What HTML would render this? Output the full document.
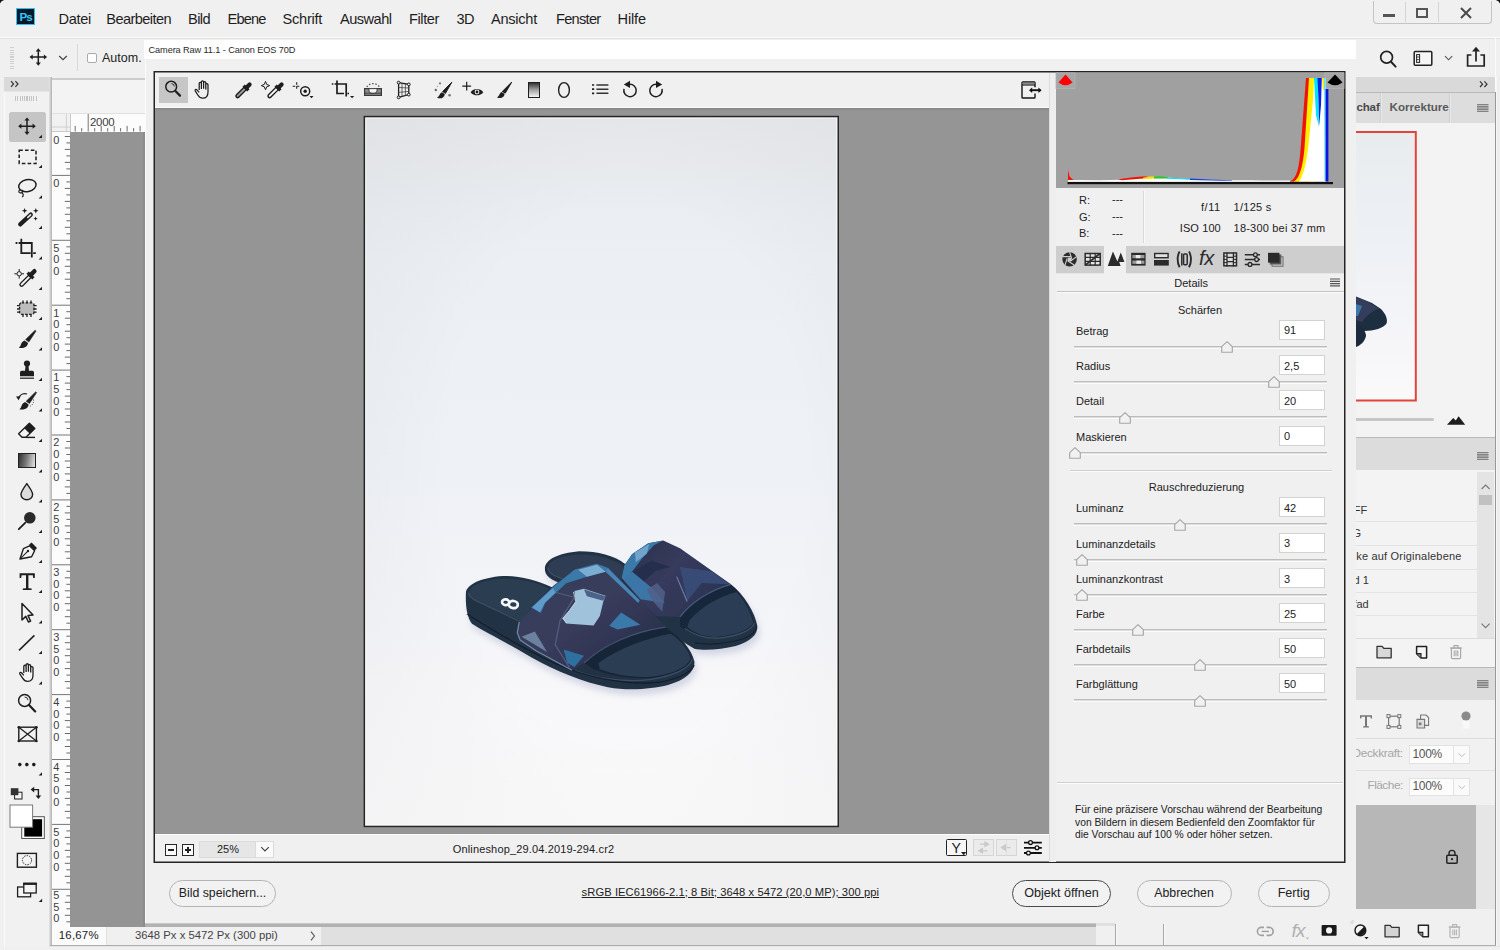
<!DOCTYPE html><html><head><meta charset="utf-8"><title>Camera Raw</title><style>
*{box-sizing:border-box}
html,body{margin:0;padding:0}
body{width:1500px;height:950px;position:relative;overflow:hidden;background:#f0f0f0;font-family:"Liberation Sans",sans-serif;color:#222;font-size:12px}
.a{position:absolute}
.t{position:absolute;white-space:nowrap;line-height:1}
svg{position:absolute;overflow:visible}
</style></head><body>
<div class="a" style="left:0px;top:0px;width:1500px;height:950px;background:#f0f0f0;"></div>
<div class="a" style="left:0px;top:37px;width:1500px;height:1px;background:#fafafa;"></div>
<div class="a" style="left:0px;top:38px;width:1500px;height:1px;background:#e2e2e2;"></div>
<div class="a" style="left:16px;top:8px;width:19px;height:17.4px;background:#07182a;border:1px solid #29c4f4;"></div>
<div class="t" style="left:19.6px;top:11.01px;font-size:11.6px;color:#35c8f4;letter-spacing:-1.194px;font-weight:bold;">Ps</div>
<div class="t" style="left:58.5px;top:11.96px;font-size:14.6px;color:#1e1e1e;letter-spacing:-0.357px;">Datei</div>
<div class="t" style="left:106.3px;top:11.96px;font-size:14.6px;color:#1e1e1e;letter-spacing:-0.592px;">Bearbeiten</div>
<div class="t" style="left:188px;top:11.96px;font-size:14.6px;color:#1e1e1e;letter-spacing:-0.586px;">Bild</div>
<div class="t" style="left:227.5px;top:11.96px;font-size:14.6px;color:#1e1e1e;letter-spacing:-0.843px;">Ebene</div>
<div class="t" style="left:282.6px;top:11.96px;font-size:14.6px;color:#1e1e1e;letter-spacing:-0.282px;">Schrift</div>
<div class="t" style="left:340px;top:11.96px;font-size:14.6px;color:#1e1e1e;letter-spacing:-0.526px;">Auswahl</div>
<div class="t" style="left:409px;top:11.96px;font-size:14.6px;color:#1e1e1e;letter-spacing:-0.407px;">Filter</div>
<div class="t" style="left:456.5px;top:11.96px;font-size:14.6px;color:#1e1e1e;letter-spacing:-0.582px;">3D</div>
<div class="t" style="left:491px;top:11.96px;font-size:14.6px;color:#1e1e1e;letter-spacing:-0.268px;">Ansicht</div>
<div class="t" style="left:556px;top:11.96px;font-size:14.6px;color:#1e1e1e;letter-spacing:-0.714px;">Fenster</div>
<div class="t" style="left:617.5px;top:11.96px;font-size:14.6px;color:#1e1e1e;letter-spacing:-0.141px;">Hilfe</div>
<div class="a" style="left:1372.5px;top:1px;width:119.5px;height:22.6px;background:#f0f0f0;border:1px solid #c4c4c4;border-top:none;border-radius:0 0 4px 4px;"></div>
<div class="a" style="left:1405px;top:2px;width:1px;height:20px;background:#d4d4d4;"></div>
<div class="a" style="left:1438px;top:2px;width:1px;height:20px;background:#d4d4d4;"></div>
<div class="a" style="left:1383.4px;top:13.8px;width:11.4px;height:3.6px;background:#555;"></div>
<div class="a" style="left:1416px;top:8.4px;width:12.2px;height:9.4px;border:2.2px solid #555;"></div>
<svg style="left:1460px;top:6.5px" width="12" height="12"><path d="M1 1L11 11M11 1L1 11" stroke="#4a4a4a" stroke-width="2" fill="none"/></svg>
<div class="t" style="left:102px;top:52px;font-size:12.5px;color:#222;">Autom.</div>
<div class="a" style="left:87px;top:53px;width:10px;height:10px;background:#fff;border:1px solid #aaa;border-radius:2px;"></div>
<div class="a" style="left:77px;top:44px;width:1px;height:27px;background:#d8d8d8;"></div>
<div class="a" style="left:4px;top:77px;width:46px;height:870px;background:#f1f1f1;"></div>
<div class="a" style="left:4px;top:77px;width:1px;height:870px;background:#fafafa;"></div>
<div class="a" style="left:4px;top:77px;width:46px;height:14px;background:#dadada;"></div>
<div class="a" style="left:4px;top:91px;width:46px;height:1px;background:#e6e6e6;"></div>
<svg style="left:9px;top:79px" width="14" height="10" viewBox="9 79 14 10"><path d="M11 81.2L13.6 84L11 86.8M15.4 81.2L18 84L15.4 86.8" fill="none" stroke="#333" stroke-width="1.2"/></svg>
<div class="a" style="left:15px;top:96px;width:23px;height:5px;background:repeating-linear-gradient(90deg,#c4c4c4 0 1px,transparent 1px 2.3px)"></div>
<div class="a" style="left:49px;top:77px;width:1px;height:870px;background:#dedede;"></div>
<div class="a" style="left:50px;top:77px;width:1px;height:870px;background:#cbcbcb;"></div>
<div class="a" style="left:51px;top:77px;width:1px;height:870px;background:#bababa;"></div>
<div class="a" style="left:10px;top:46px;width:4px;height:23px;background:repeating-linear-gradient(0deg,#cfcfcf 0 1px,transparent 1px 2.3px)"></div>
<svg style="left:26px;top:44px" width="26" height="26" viewBox="26 44 26 26"><path d="M38.3 50.2V63.8M31.499999999999996 57H45.099999999999994" stroke="#1e1e1e" stroke-width="1.5"/><path d="M38.3 48.2l2.6 3.2h-5.2zM38.3 65.8l2.6 -3.2h-5.2zM29.499999999999996 57l3.2 -2.6v5.2zM47.099999999999994 57l-3.2 -2.6v5.2z" fill="#1e1e1e"/></svg>
<svg style="left:56px;top:50px" width="14" height="12" viewBox="56 50 14 12"><path d="M59.2 56L63 59.6L66.8 56" fill="none" stroke="#444" stroke-width="1.2"/></svg>
<div class="a" style="left:8.5px;top:112px;width:37.5px;height:29.5px;background:#c5c5c5;border-radius:2.5px;"></div>
<div class="a" style="left:18.4px;top:453.4px;width:18px;height:14.2px;border:1.4px solid #222;background:linear-gradient(100deg,#333,#777 45%,#e8e8e8)"></div>
<svg style="left:0px;top:100px" width="52" height="820" viewBox="0 100 52 820"><path d="M27 119.4V133.0M20.2 126.2H33.8" stroke="#1e1e1e" stroke-width="1.5"/><path d="M27 117.4l2.6 3.2h-5.2zM27 135.0l2.6 -3.2h-5.2zM18.2 126.2l3.2 -2.6v5.2zM35.8 126.2l-3.2 -2.6v5.2z" fill="#1e1e1e"/><path d="M42.0 134.7V138.1H38.6Z" fill="#1e1e1e"/><rect x="19.2" y="150.2" width="16.8" height="13.2" fill="none" stroke="#1e1e1e" stroke-width="1.5" stroke-dasharray="3.6 2.2"/><path d="M42.0 164.7V168.1H38.6Z" fill="#1e1e1e"/><g transform="rotate(-12 27.4 185.6)"><ellipse cx="27.4" cy="185.6" rx="8.8" ry="6" fill="none" stroke="#1e1e1e" stroke-width="1.5"/></g><path d="M20.6 189.6c-1.8 .2 -2.6 2.6 -.6 3.2c2 .5 3.6 -1.4 2.2 -2.8M22 192.6c1.6 1.4 1.6 3.2 .2 4.6" fill="none" stroke="#1e1e1e" stroke-width="1.2"/><path d="M42.0 195.2V198.6H38.6Z" fill="#1e1e1e"/><path d="M20.2 224.4L30.8 214.6" stroke="#1e1e1e" stroke-width="4.2" stroke-linecap="round"/><path d="M27.8 217.4L30.6 214.8" stroke="#e8e8e8" stroke-width="1.6" stroke-linecap="round"/><path d="M24.6 208.0L25.384 210.01600000000002L27.400000000000002 210.8L25.384 211.584L24.6 213.60000000000002L23.816000000000003 211.584L21.8 210.8L23.816000000000003 210.01600000000002Z" fill="#1e1e1e"/><path d="M35.8 208.0L36.583999999999996 210.01600000000002L38.599999999999994 210.8L36.583999999999996 211.584L35.8 213.60000000000002L35.016 211.584L33.0 210.8L35.016 210.01600000000002Z" fill="#1e1e1e"/><path d="M35.6 216.4L36.216 217.98399999999998L37.800000000000004 218.6L36.216 219.216L35.6 220.79999999999998L34.984 219.216L33.4 218.6L34.984 217.98399999999998Z" fill="#1e1e1e"/><path d="M42.0 225.7V229.1H38.6Z" fill="#1e1e1e"/><path d="M21.3 238.8V253.2H30.6M18.6 243H31.8V257.4" fill="none" stroke="#1e1e1e" stroke-width="1.8"/><path d="M15.6 243h1.8M33.2 253.2h2.6" stroke="#1e1e1e" stroke-width="1.8"/><path d="M42.0 256.2V259.6H38.6Z" fill="#1e1e1e"/><path d="M21.6 284.6L29.6 276.6" stroke="#1e1e1e" stroke-width="4.6" stroke-linecap="round"/><path d="M21.7 284.5L28.8 277.4" stroke="#f4f4f4" stroke-width="2" stroke-linecap="round"/><path d="M27.6 272.6L33.4 278.4" stroke="#1e1e1e" stroke-width="3.2"/><path d="M31 274.6L34.4 271.2" stroke="#1e1e1e" stroke-width="4.4" stroke-linecap="round"/><circle cx="19.2" cy="273.8" r="2.2" fill="none" stroke="#1e1e1e" stroke-width="1"/><path d="M19.2 269V271.4M19.2 276.2V278.6M14.4 273.8H16.8M21.6 273.8H24" stroke="#1e1e1e" stroke-width="1"/><path d="M42.0 286.7V290.1H38.6Z" fill="#1e1e1e"/><rect x="19.6" y="302.8" width="14.4" height="11.6" rx="2" fill="#bdbdbd" stroke="#1e1e1e" stroke-width="1.3" stroke-dasharray="2.6 1.4"/><path d="M23 300.4V303M27 300.4V303M31 300.4V303M23 314.4V317M27 314.4V317M31 314.4V317M17 305.6H19.8M17 309H19.8M17 312.2H19.8M33.8 305.6H36.6M33.8 309H36.6M33.8 312.2H36.6" stroke="#1e1e1e" stroke-width="1.3"/><path d="M42.0 316.7V320.1H38.6Z" fill="#1e1e1e"/><g transform="translate(0,0)"><path d="M35.2 330.2L36 331L28.8 342L25.6 339.6Z" fill="#1e1e1e" stroke="#1e1e1e" stroke-width="0.6" stroke-linejoin="round"/><path d="M24.6 340.4L28 343C27.8 346.6 24 348.6 18.8 347.8C21.4 346 20.4 341.8 24.6 340.4Z" fill="#1e1e1e"/></g><path d="M42.0 347.2V350.6H38.6Z" fill="#1e1e1e"/><circle cx="27" cy="363.6" r="3.1" fill="#1e1e1e"/><path d="M25.6 365.5h2.8l.6 5.6h-4z" fill="#1e1e1e"/><path d="M20 376.2V372.4a1.6 1.6 0 0 1 1.6 -1.6H32.4a1.6 1.6 0 0 1 1.6 1.6V376.2Z" fill="#1e1e1e"/><path d="M20 378.2H34" stroke="#1e1e1e" stroke-width="1.2"/><path d="M42.0 377.7V381.1H38.6Z" fill="#1e1e1e"/><g transform="translate(0.6,61.6)"><path d="M35.2 330.2L36 331L28.8 342L25.6 339.6Z" fill="#1e1e1e" stroke="#1e1e1e" stroke-width="0.6" stroke-linejoin="round"/><path d="M24.6 340.4L28 343C27.8 346.6 24 348.6 18.8 347.8C21.4 346 20.4 341.8 24.6 340.4Z" fill="#1e1e1e"/></g><path d="M18.4 398.2C20 394.6 23.6 393 27 394" fill="none" stroke="#1e1e1e" stroke-width="1.2"/><path d="M16 396.4L20.6 396.2L18.6 400.2Z" fill="#1e1e1e"/><path d="M33.4 399.4C34 402.6 32.6 405 30 406.4" fill="none" stroke="#666" stroke-width="1" stroke-dasharray="1.2 1.2"/><path d="M42.0 408.2V411.6H38.6Z" fill="#1e1e1e"/><path d="M29.4 423.2L34.8 428.6L26 437.2L22 437.2L18.6 433.8Z" fill="#f4f4f4" stroke="#1e1e1e" stroke-width="1.4" stroke-linejoin="round"/><path d="M29.4 423.2L34.8 428.6L29.6 433.6L24.2 428.2Z" fill="#1e1e1e"/><path d="M26 437.4H35" stroke="#1e1e1e" stroke-width="1.4"/><path d="M42.0 438.7V442.1H38.6Z" fill="#1e1e1e"/><path d="M42.0 469.2V472.6H38.6Z" fill="#1e1e1e"/><path d="M26.8 483.6C30 488 32.6 491.4 32.6 494.4A5.8 5.4 0 0 1 21 494.4C21 491.4 23.6 488 26.8 483.6Z" fill="#dcdcdc" stroke="#1e1e1e" stroke-width="1.4" stroke-linejoin="round"/><path d="M42.0 499.2V502.6H38.6Z" fill="#1e1e1e"/><circle cx="29.8" cy="517.8" r="5.8" fill="#2a2a2a"/><path d="M25.4 522.6L18.8 529.2" stroke="#1e1e1e" stroke-width="1.8" stroke-linecap="round"/><path d="M42.0 529.7V533.1H38.6Z" fill="#1e1e1e"/><path d="M20 559L23.4 548.6L29.6 545.8L34.6 550.8L31.6 556.8Z" fill="#f4f4f4" stroke="#1e1e1e" stroke-width="1.4" stroke-linejoin="round"/><path d="M29 544.8L31.6 542.6L37 548L34.8 550.6Z" fill="#1e1e1e"/><path d="M20.4 558.6L27.6 551.4" stroke="#1e1e1e" stroke-width="1.1"/><circle cx="28" cy="551" r="1.2" fill="#1e1e1e"/><path d="M42.0 559.7V563.1H38.6Z" fill="#1e1e1e"/><path d="M19.6 573.2H34.8V578H33.2L32.8 575.2H28.4V588.2L31.6 588.6V590H22.8V588.6L26 588.2V575.2H21.6L21.2 578H19.6Z" fill="#1e1e1e"/><path d="M42.0 589.7V593.1H38.6Z" fill="#1e1e1e"/><path d="M22 603.6V620L25.8 616.4L28.4 622L30.6 621L28 615.6L33 615Z" fill="#f4f4f4" stroke="#1e1e1e" stroke-width="1.5" stroke-linejoin="round"/><path d="M42.0 620.2V623.6H38.6Z" fill="#1e1e1e"/><path d="M19 650.4L34.4 635.4" stroke="#1e1e1e" stroke-width="1.5"/><path d="M42.0 650.7V654.1H38.6Z" fill="#1e1e1e"/><g transform="translate(16.6,662)"><path d="M7.2 11V4.4a1.15 1.15 0 0 1 2.3 0V10M9.5 9.6V2.9a1.15 1.15 0 0 1 2.3 0V9.6M11.8 9.8V3.7a1.15 1.15 0 0 1 2.3 0V10.2M14.1 10.6V5.8a1.15 1.15 0 0 1 2.3 0V13c0 4-2 6.4-5.4 6.4c-2.6 0-3.8-1.2-5-3.2L3.2 11.8c-.6-1.1 .8-2 1.7-1L7.2 13.4" fill="#f4f4f4" stroke="#1e1e1e" stroke-width="1.3" stroke-linejoin="round"/></g><path d="M42.0 681.2V684.6H38.6Z" fill="#1e1e1e"/><circle cx="24.6" cy="700.4" r="6" fill="none" stroke="#1e1e1e" stroke-width="1.5"/><path d="M29 705L35.2 711.4" stroke="#1e1e1e" stroke-width="2.2" stroke-linecap="round"/><path d="M24.6 697A3.4 3.4 0 0 1 28 700.2" fill="none" stroke="#1e1e1e" stroke-width="0.9"/><rect x="18.8" y="727.2" width="17.6" height="13.8" fill="none" stroke="#1e1e1e" stroke-width="1.4"/><path d="M18.8 727.2L36.4 741M36.4 727.2L18.8 741" stroke="#1e1e1e" stroke-width="1.2"/><g fill="#1e1e1e"><circle cx="18.8" cy="727.2" r="1.3"/><circle cx="36.4" cy="727.2" r="1.3"/><circle cx="18.8" cy="741" r="1.3"/><circle cx="36.4" cy="741" r="1.3"/></g><g fill="#1e1e1e"><circle cx="19.8" cy="764.6" r="1.8"/><circle cx="26.8" cy="764.6" r="1.8"/><circle cx="33.8" cy="764.6" r="1.8"/></g><path d="M42.0 772.2V775.6H38.6Z" fill="#1e1e1e"/><rect x="14.6" y="792.2" width="7.4" height="6.8" fill="#f6f6f6" stroke="#1e1e1e" stroke-width="1"/><rect x="10.8" y="788.2" width="7.6" height="7" fill="#333"/><path d="M33.4 789.6H38.4V796.4" fill="none" stroke="#1e1e1e" stroke-width="1.4"/><path d="M30.6 789.6L34.2 786.8V792.4ZM38.4 799L35.6 795.4H41.2Z" fill="#1e1e1e"/><rect x="21.7" y="816.7" width="22.6" height="21.8" fill="#fff" stroke="#555" stroke-width="1"/><rect x="24.3" y="819.2" width="17.8" height="17.4" fill="#000"/><rect x="10" y="805" width="22.6" height="22.2" fill="#fff" stroke="#7a7a7a" stroke-width="1"/><rect x="17.4" y="853.4" width="19" height="13.8" fill="#f4f4f4" stroke="#1e1e1e" stroke-width="1.4"/><circle cx="27" cy="860.2" r="4.6" fill="none" stroke="#1e1e1e" stroke-width="1" stroke-dasharray="1.4 1.2"/><rect x="17.6" y="887" width="13" height="9.8" fill="#f4f4f4" stroke="#1e1e1e" stroke-width="1.3"/><rect x="23.8" y="883.4" width="12.4" height="9.6" fill="#f4f4f4" stroke="#1e1e1e" stroke-width="1.3"/><path d="M23.2 883.8H36.8" stroke="#1e1e1e" stroke-width="2.2"/><path d="M42.1 898.7V902.1H38.7Z" fill="#1e1e1e"/></svg>
<div class="a" style="left:52px;top:78px;width:93px;height:1.6px;background:#cdcdcd;"></div>
<div class="a" style="left:52px;top:79.6px;width:93px;height:33px;background:#f3f3f3;"></div>
<div class="a" style="left:52px;top:112.5px;width:93px;height:1px;background:#e0e0e0;"></div>
<div class="a" style="left:70px;top:131px;width:75px;height:796px;background:#949494;"></div>
<div class="a" style="left:143px;top:131px;width:2px;height:796px;background:#8c8c8c;"></div>
<div class="a" style="left:52px;top:113.5px;width:93px;height:18px;background:#fcfcfc;"></div>
<div class="a" style="left:52px;top:113.5px;width:18px;height:18px;background:#f1f1f1;"></div>
<div class="a" style="left:52px;top:131px;width:18px;height:0.8px;background:#c8c8c8;"></div>
<div class="a" style="left:69.5px;top:113.5px;width:0.8px;height:18px;background:#c8c8c8;"></div>
<svg style="left:52px;top:113px" width="93" height="19" viewBox="52 113 93 19"><path d="M88.2 114V131.5" stroke="#777" stroke-width="1"/><path d="M75.2 125.9V131.5" stroke="#6e6e6e" stroke-width="1"/><path d="M81.7 128.1V131.5" stroke="#6e6e6e" stroke-width="1"/><path d="M94.7 128.1V131.5" stroke="#6e6e6e" stroke-width="1"/><path d="M101.2 125.9V131.5" stroke="#6e6e6e" stroke-width="1"/><path d="M107.7 128.1V131.5" stroke="#6e6e6e" stroke-width="1"/><path d="M114.2 125.9V131.5" stroke="#6e6e6e" stroke-width="1"/><path d="M120.6 128.1V131.5" stroke="#6e6e6e" stroke-width="1"/><path d="M127.1 125.9V131.5" stroke="#6e6e6e" stroke-width="1"/><path d="M133.6 128.1V131.5" stroke="#6e6e6e" stroke-width="1"/><path d="M140.1 125.9V131.5" stroke="#6e6e6e" stroke-width="1"/><path d="M66.4 114V131.5M52 127H70" stroke="#d0d0d0" stroke-width="1"/></svg>
<div class="t" style="left:89.9px;top:116.93px;font-size:11.4px;color:#3c3c3c;letter-spacing:-0.215px;">2000</div>
<div class="a" style="left:52px;top:131.5px;width:18px;height:795.5px;background:#fcfcfc;"></div>
<svg style="left:52px;top:131px" width="18" height="796" viewBox="52 131 18 796"><path d="M64.8 136.5H70" stroke="#6a6a6a" stroke-width="1"/><path d="M66.4 142.9H70" stroke="#6a6a6a" stroke-width="1"/><path d="M64.8 149.4H70" stroke="#6a6a6a" stroke-width="1"/><path d="M66.4 155.9H70" stroke="#6a6a6a" stroke-width="1"/><path d="M64.8 162.4H70" stroke="#6a6a6a" stroke-width="1"/><path d="M66.4 168.9H70" stroke="#6a6a6a" stroke-width="1"/><path d="M52 175.4H70" stroke="#777" stroke-width="1"/><path d="M66.4 181.9H70" stroke="#6a6a6a" stroke-width="1"/><path d="M64.8 188.4H70" stroke="#6a6a6a" stroke-width="1"/><path d="M66.4 194.9H70" stroke="#6a6a6a" stroke-width="1"/><path d="M64.8 201.4H70" stroke="#6a6a6a" stroke-width="1"/><path d="M66.4 207.9H70" stroke="#6a6a6a" stroke-width="1"/><path d="M64.8 214.3H70" stroke="#6a6a6a" stroke-width="1"/><path d="M66.4 220.8H70" stroke="#6a6a6a" stroke-width="1"/><path d="M64.8 227.3H70" stroke="#6a6a6a" stroke-width="1"/><path d="M66.4 233.8H70" stroke="#6a6a6a" stroke-width="1"/><path d="M52 240.3H70" stroke="#777" stroke-width="1"/><path d="M66.4 246.8H70" stroke="#6a6a6a" stroke-width="1"/><path d="M64.8 253.3H70" stroke="#6a6a6a" stroke-width="1"/><path d="M66.4 259.8H70" stroke="#6a6a6a" stroke-width="1"/><path d="M64.8 266.3H70" stroke="#6a6a6a" stroke-width="1"/><path d="M66.4 272.8H70" stroke="#6a6a6a" stroke-width="1"/><path d="M64.8 279.2H70" stroke="#6a6a6a" stroke-width="1"/><path d="M66.4 285.7H70" stroke="#6a6a6a" stroke-width="1"/><path d="M64.8 292.2H70" stroke="#6a6a6a" stroke-width="1"/><path d="M66.4 298.7H70" stroke="#6a6a6a" stroke-width="1"/><path d="M52 305.2H70" stroke="#777" stroke-width="1"/><path d="M66.4 311.7H70" stroke="#6a6a6a" stroke-width="1"/><path d="M64.8 318.2H70" stroke="#6a6a6a" stroke-width="1"/><path d="M66.4 324.7H70" stroke="#6a6a6a" stroke-width="1"/><path d="M64.8 331.2H70" stroke="#6a6a6a" stroke-width="1"/><path d="M66.4 337.7H70" stroke="#6a6a6a" stroke-width="1"/><path d="M64.8 344.1H70" stroke="#6a6a6a" stroke-width="1"/><path d="M66.4 350.6H70" stroke="#6a6a6a" stroke-width="1"/><path d="M64.8 357.1H70" stroke="#6a6a6a" stroke-width="1"/><path d="M66.4 363.6H70" stroke="#6a6a6a" stroke-width="1"/><path d="M52 370.1H70" stroke="#777" stroke-width="1"/><path d="M66.4 376.6H70" stroke="#6a6a6a" stroke-width="1"/><path d="M64.8 383.1H70" stroke="#6a6a6a" stroke-width="1"/><path d="M66.4 389.6H70" stroke="#6a6a6a" stroke-width="1"/><path d="M64.8 396.1H70" stroke="#6a6a6a" stroke-width="1"/><path d="M66.4 402.6H70" stroke="#6a6a6a" stroke-width="1"/><path d="M64.8 409.0H70" stroke="#6a6a6a" stroke-width="1"/><path d="M66.4 415.5H70" stroke="#6a6a6a" stroke-width="1"/><path d="M64.8 422.0H70" stroke="#6a6a6a" stroke-width="1"/><path d="M66.4 428.5H70" stroke="#6a6a6a" stroke-width="1"/><path d="M52 435.0H70" stroke="#777" stroke-width="1"/><path d="M66.4 441.5H70" stroke="#6a6a6a" stroke-width="1"/><path d="M64.8 448.0H70" stroke="#6a6a6a" stroke-width="1"/><path d="M66.4 454.5H70" stroke="#6a6a6a" stroke-width="1"/><path d="M64.8 461.0H70" stroke="#6a6a6a" stroke-width="1"/><path d="M66.4 467.4H70" stroke="#6a6a6a" stroke-width="1"/><path d="M64.8 473.9H70" stroke="#6a6a6a" stroke-width="1"/><path d="M66.4 480.4H70" stroke="#6a6a6a" stroke-width="1"/><path d="M64.8 486.9H70" stroke="#6a6a6a" stroke-width="1"/><path d="M66.4 493.4H70" stroke="#6a6a6a" stroke-width="1"/><path d="M52 499.9H70" stroke="#777" stroke-width="1"/><path d="M66.4 506.4H70" stroke="#6a6a6a" stroke-width="1"/><path d="M64.8 512.9H70" stroke="#6a6a6a" stroke-width="1"/><path d="M66.4 519.4H70" stroke="#6a6a6a" stroke-width="1"/><path d="M64.8 525.9H70" stroke="#6a6a6a" stroke-width="1"/><path d="M66.4 532.4H70" stroke="#6a6a6a" stroke-width="1"/><path d="M64.8 538.8H70" stroke="#6a6a6a" stroke-width="1"/><path d="M66.4 545.3H70" stroke="#6a6a6a" stroke-width="1"/><path d="M64.8 551.8H70" stroke="#6a6a6a" stroke-width="1"/><path d="M66.4 558.3H70" stroke="#6a6a6a" stroke-width="1"/><path d="M52 564.8H70" stroke="#777" stroke-width="1"/><path d="M66.4 571.3H70" stroke="#6a6a6a" stroke-width="1"/><path d="M64.8 577.8H70" stroke="#6a6a6a" stroke-width="1"/><path d="M66.4 584.3H70" stroke="#6a6a6a" stroke-width="1"/><path d="M64.8 590.8H70" stroke="#6a6a6a" stroke-width="1"/><path d="M66.4 597.3H70" stroke="#6a6a6a" stroke-width="1"/><path d="M64.8 603.7H70" stroke="#6a6a6a" stroke-width="1"/><path d="M66.4 610.2H70" stroke="#6a6a6a" stroke-width="1"/><path d="M64.8 616.7H70" stroke="#6a6a6a" stroke-width="1"/><path d="M66.4 623.2H70" stroke="#6a6a6a" stroke-width="1"/><path d="M52 629.7H70" stroke="#777" stroke-width="1"/><path d="M66.4 636.2H70" stroke="#6a6a6a" stroke-width="1"/><path d="M64.8 642.7H70" stroke="#6a6a6a" stroke-width="1"/><path d="M66.4 649.2H70" stroke="#6a6a6a" stroke-width="1"/><path d="M64.8 655.7H70" stroke="#6a6a6a" stroke-width="1"/><path d="M66.4 662.2H70" stroke="#6a6a6a" stroke-width="1"/><path d="M64.8 668.6H70" stroke="#6a6a6a" stroke-width="1"/><path d="M66.4 675.1H70" stroke="#6a6a6a" stroke-width="1"/><path d="M64.8 681.6H70" stroke="#6a6a6a" stroke-width="1"/><path d="M66.4 688.1H70" stroke="#6a6a6a" stroke-width="1"/><path d="M52 694.6H70" stroke="#777" stroke-width="1"/><path d="M66.4 701.1H70" stroke="#6a6a6a" stroke-width="1"/><path d="M64.8 707.6H70" stroke="#6a6a6a" stroke-width="1"/><path d="M66.4 714.1H70" stroke="#6a6a6a" stroke-width="1"/><path d="M64.8 720.6H70" stroke="#6a6a6a" stroke-width="1"/><path d="M66.4 727.1H70" stroke="#6a6a6a" stroke-width="1"/><path d="M64.8 733.5H70" stroke="#6a6a6a" stroke-width="1"/><path d="M66.4 740.0H70" stroke="#6a6a6a" stroke-width="1"/><path d="M64.8 746.5H70" stroke="#6a6a6a" stroke-width="1"/><path d="M66.4 753.0H70" stroke="#6a6a6a" stroke-width="1"/><path d="M52 759.5H70" stroke="#777" stroke-width="1"/><path d="M66.4 766.0H70" stroke="#6a6a6a" stroke-width="1"/><path d="M64.8 772.5H70" stroke="#6a6a6a" stroke-width="1"/><path d="M66.4 779.0H70" stroke="#6a6a6a" stroke-width="1"/><path d="M64.8 785.5H70" stroke="#6a6a6a" stroke-width="1"/><path d="M66.4 792.0H70" stroke="#6a6a6a" stroke-width="1"/><path d="M64.8 798.4H70" stroke="#6a6a6a" stroke-width="1"/><path d="M66.4 804.9H70" stroke="#6a6a6a" stroke-width="1"/><path d="M64.8 811.4H70" stroke="#6a6a6a" stroke-width="1"/><path d="M66.4 817.9H70" stroke="#6a6a6a" stroke-width="1"/><path d="M52 824.4H70" stroke="#777" stroke-width="1"/><path d="M66.4 830.9H70" stroke="#6a6a6a" stroke-width="1"/><path d="M64.8 837.4H70" stroke="#6a6a6a" stroke-width="1"/><path d="M66.4 843.9H70" stroke="#6a6a6a" stroke-width="1"/><path d="M64.8 850.4H70" stroke="#6a6a6a" stroke-width="1"/><path d="M66.4 856.9H70" stroke="#6a6a6a" stroke-width="1"/><path d="M64.8 863.3H70" stroke="#6a6a6a" stroke-width="1"/><path d="M66.4 869.8H70" stroke="#6a6a6a" stroke-width="1"/><path d="M64.8 876.3H70" stroke="#6a6a6a" stroke-width="1"/><path d="M66.4 882.8H70" stroke="#6a6a6a" stroke-width="1"/><path d="M52 889.3H70" stroke="#777" stroke-width="1"/><path d="M66.4 895.8H70" stroke="#6a6a6a" stroke-width="1"/><path d="M64.8 902.3H70" stroke="#6a6a6a" stroke-width="1"/><path d="M66.4 908.8H70" stroke="#6a6a6a" stroke-width="1"/><path d="M64.8 915.3H70" stroke="#6a6a6a" stroke-width="1"/><path d="M66.4 921.8H70" stroke="#6a6a6a" stroke-width="1"/></svg>
<div class="t" style="left:53.3px;top:135.0px;font-size:11px;color:#3c3c3c;letter-spacing:-0.3px;">0</div>
<div class="t" style="left:53.3px;top:177.70000000000002px;font-size:11px;color:#3c3c3c;letter-spacing:-0.3px;">0</div>
<div class="t" style="left:53.3px;top:242.60000000000002px;font-size:11px;color:#3c3c3c;letter-spacing:-0.3px;">5</div>
<div class="t" style="left:53.3px;top:254.20000000000002px;font-size:11px;color:#3c3c3c;letter-spacing:-0.3px;">0</div>
<div class="t" style="left:53.3px;top:265.8px;font-size:11px;color:#3c3c3c;letter-spacing:-0.3px;">0</div>
<div class="t" style="left:53.3px;top:307.50000000000006px;font-size:11px;color:#3c3c3c;letter-spacing:-0.3px;">1</div>
<div class="t" style="left:53.3px;top:319.1000000000001px;font-size:11px;color:#3c3c3c;letter-spacing:-0.3px;">0</div>
<div class="t" style="left:53.3px;top:330.70000000000005px;font-size:11px;color:#3c3c3c;letter-spacing:-0.3px;">0</div>
<div class="t" style="left:53.3px;top:342.30000000000007px;font-size:11px;color:#3c3c3c;letter-spacing:-0.3px;">0</div>
<div class="t" style="left:53.3px;top:372.40000000000003px;font-size:11px;color:#3c3c3c;letter-spacing:-0.3px;">1</div>
<div class="t" style="left:53.3px;top:384.00000000000006px;font-size:11px;color:#3c3c3c;letter-spacing:-0.3px;">5</div>
<div class="t" style="left:53.3px;top:395.6px;font-size:11px;color:#3c3c3c;letter-spacing:-0.3px;">0</div>
<div class="t" style="left:53.3px;top:407.20000000000005px;font-size:11px;color:#3c3c3c;letter-spacing:-0.3px;">0</div>
<div class="t" style="left:53.3px;top:437.3px;font-size:11px;color:#3c3c3c;letter-spacing:-0.3px;">2</div>
<div class="t" style="left:53.3px;top:448.90000000000003px;font-size:11px;color:#3c3c3c;letter-spacing:-0.3px;">0</div>
<div class="t" style="left:53.3px;top:460.5px;font-size:11px;color:#3c3c3c;letter-spacing:-0.3px;">0</div>
<div class="t" style="left:53.3px;top:472.1px;font-size:11px;color:#3c3c3c;letter-spacing:-0.3px;">0</div>
<div class="t" style="left:53.3px;top:502.2px;font-size:11px;color:#3c3c3c;letter-spacing:-0.3px;">2</div>
<div class="t" style="left:53.3px;top:513.8px;font-size:11px;color:#3c3c3c;letter-spacing:-0.3px;">5</div>
<div class="t" style="left:53.3px;top:525.4px;font-size:11px;color:#3c3c3c;letter-spacing:-0.3px;">0</div>
<div class="t" style="left:53.3px;top:537.0px;font-size:11px;color:#3c3c3c;letter-spacing:-0.3px;">0</div>
<div class="t" style="left:53.3px;top:567.1px;font-size:11px;color:#3c3c3c;letter-spacing:-0.3px;">3</div>
<div class="t" style="left:53.3px;top:578.7px;font-size:11px;color:#3c3c3c;letter-spacing:-0.3px;">0</div>
<div class="t" style="left:53.3px;top:590.3000000000001px;font-size:11px;color:#3c3c3c;letter-spacing:-0.3px;">0</div>
<div class="t" style="left:53.3px;top:601.9px;font-size:11px;color:#3c3c3c;letter-spacing:-0.3px;">0</div>
<div class="t" style="left:53.3px;top:632.0px;font-size:11px;color:#3c3c3c;letter-spacing:-0.3px;">3</div>
<div class="t" style="left:53.3px;top:643.6px;font-size:11px;color:#3c3c3c;letter-spacing:-0.3px;">5</div>
<div class="t" style="left:53.3px;top:655.2px;font-size:11px;color:#3c3c3c;letter-spacing:-0.3px;">0</div>
<div class="t" style="left:53.3px;top:666.8px;font-size:11px;color:#3c3c3c;letter-spacing:-0.3px;">0</div>
<div class="t" style="left:53.3px;top:696.9px;font-size:11px;color:#3c3c3c;letter-spacing:-0.3px;">4</div>
<div class="t" style="left:53.3px;top:708.5px;font-size:11px;color:#3c3c3c;letter-spacing:-0.3px;">0</div>
<div class="t" style="left:53.3px;top:720.1px;font-size:11px;color:#3c3c3c;letter-spacing:-0.3px;">0</div>
<div class="t" style="left:53.3px;top:731.6999999999999px;font-size:11px;color:#3c3c3c;letter-spacing:-0.3px;">0</div>
<div class="t" style="left:53.3px;top:761.8px;font-size:11px;color:#3c3c3c;letter-spacing:-0.3px;">4</div>
<div class="t" style="left:53.3px;top:773.4px;font-size:11px;color:#3c3c3c;letter-spacing:-0.3px;">5</div>
<div class="t" style="left:53.3px;top:785.0px;font-size:11px;color:#3c3c3c;letter-spacing:-0.3px;">0</div>
<div class="t" style="left:53.3px;top:796.5999999999999px;font-size:11px;color:#3c3c3c;letter-spacing:-0.3px;">0</div>
<div class="t" style="left:53.3px;top:826.6999999999999px;font-size:11px;color:#3c3c3c;letter-spacing:-0.3px;">5</div>
<div class="t" style="left:53.3px;top:838.3px;font-size:11px;color:#3c3c3c;letter-spacing:-0.3px;">0</div>
<div class="t" style="left:53.3px;top:849.9px;font-size:11px;color:#3c3c3c;letter-spacing:-0.3px;">0</div>
<div class="t" style="left:53.3px;top:861.4999999999999px;font-size:11px;color:#3c3c3c;letter-spacing:-0.3px;">0</div>
<div class="t" style="left:53.3px;top:889.9000000000001px;font-size:11px;color:#3c3c3c;letter-spacing:-0.3px;">5</div>
<div class="t" style="left:53.3px;top:901.5000000000001px;font-size:11px;color:#3c3c3c;letter-spacing:-0.3px;">5</div>
<div class="t" style="left:53.3px;top:913.1000000000001px;font-size:11px;color:#3c3c3c;letter-spacing:-0.3px;">0</div>
<div class="a" style="left:145px;top:923.4px;width:951px;height:1px;background:#c8c8c8;"></div>
<div class="a" style="left:145px;top:924.4px;width:951px;height:2.6px;background:#b2b2b2;"></div>
<div class="a" style="left:52px;top:927px;width:1303px;height:18px;background:#e0e0e0;"></div>
<div class="a" style="left:106px;top:927px;width:215px;height:18px;background:#f0f0f0;"></div>
<div class="a" style="left:52px;top:927px;width:54px;height:18px;background:#fbfbfb;"></div>
<div class="a" style="left:106px;top:927px;width:1px;height:18px;background:#e2e2e2;"></div>
<div class="a" style="left:50px;top:945.2px;width:1450px;height:1px;background:#b4b4b4;"></div>
<div class="a" style="left:50px;top:946.2px;width:1450px;height:1px;background:#e4e4e4;"></div>
<div class="t" style="left:58.8px;top:930.13px;font-size:11.4px;color:#222;letter-spacing:0.223px;">16,67%</div>
<div class="t" style="left:135px;top:930.18px;font-size:11.3px;color:#444;letter-spacing:0.008px;">3648 Px x 5472 Px (300 ppi)</div>
<svg style="left:308px;top:929px" width="10" height="14" viewBox="308 929 10 14"><path d="M311 931.6L314.4 936L311 940.4" fill="none" stroke="#555" stroke-width="1.1"/></svg>
<div class="a" style="left:145px;top:39px;width:1210px;height:884px;background:#f0f0f0;"></div>
<div class="a" style="left:144.4px;top:40px;width:1211.6px;height:19.4px;background:#fff;"></div>
<div class="t" style="left:148.6px;top:45.77px;font-size:9.2px;color:#2a2a2a;letter-spacing:-0.109px;">Camera Raw 11.1 - Canon EOS 70D</div>
<div class="a" style="left:145px;top:60px;width:1px;height:863px;background:#fbfbfb;"></div>
<svg style="left:150px;top:68px" width="1200" height="800" viewBox="150 68 1200 800"><rect x="154.25" y="71.75" width="1190.5" height="790.5" fill="#f0f0f0" stroke="#242424" stroke-width="1.5"/></svg>
<div class="a" style="left:155px;top:108.4px;width:894px;height:725.4px;background:#959595;"></div>
<div class="a" style="left:155px;top:108.4px;width:894px;height:2.4px;background:linear-gradient(#848484,#969696);"></div>
<div class="a" style="left:155px;top:107.2px;width:894px;height:1.2px;background:#fbfbfb;"></div>
<div class="a" style="left:155px;top:833.8px;width:894px;height:1.4px;background:#fcfcfc;"></div>

<svg style="left:363px;top:115px" width="477" height="713" viewBox="363 115 477 713">
<defs>
<linearGradient id="pbg" x1="0" y1="0" x2="0" y2="1">
<stop offset="0" stop-color="#e7e9ec"/><stop offset="0.2" stop-color="#ecf0f4"/><stop offset="0.5" stop-color="#eef1f6"/><stop offset="0.68" stop-color="#f3f4f8"/><stop offset="0.83" stop-color="#f8f8fa"/><stop offset="1" stop-color="#fbfbfc"/>
</linearGradient>
<radialGradient id="pvg" cx="0.55" cy="0.5" r="0.75">
<stop offset="0.5" stop-color="#000" stop-opacity="0"/><stop offset="1" stop-color="#505860" stop-opacity="0.045"/>
</radialGradient>
<linearGradient id="strapL" x1="0" y1="0" x2="1" y2="1">
<stop offset="0" stop-color="#323e5c"/><stop offset="0.45" stop-color="#393c5c"/><stop offset="1" stop-color="#232c45"/>
</linearGradient>
<linearGradient id="strapR" x1="0" y1="0" x2="1" y2="0.6">
<stop offset="0" stop-color="#26314d"/><stop offset="0.5" stop-color="#373a5b"/><stop offset="1" stop-color="#2a3553"/>
</linearGradient>
<filter id="bl3" x="-20%" y="-20%" width="140%" height="140%"><feGaussianBlur stdDeviation="14"/></filter>
<filter id="bl1"><feGaussianBlur stdDeviation="1.5"/></filter>
</defs>
<rect x="364" y="116" width="475" height="711" fill="url(#pbg)"/>
<rect x="364" y="116" width="475" height="711" fill="url(#pvg)"/>
<g transform="translate(440,520) scale(0.24)">
 <!-- soft ground shadows -->
 <g filter="url(#bl3)" opacity="0.75" transform="translate(10,24)">
  <path d="M437,200 C440,165 490,138 580,130 C660,130 725,148 770,182 L1212,268 C1268,312 1312,385 1322,440 C1326,478 1292,508 1232,525 C1172,540 1100,545 1060,536 L900,440 L700,330 L520,270 C460,250 435,232 437,200 Z" fill="#c9cddd"/>
  <path d="M108,302 C112,268 170,240 262,233 C340,233 400,250 462,278 L940,446 C1000,482 1050,540 1060,590 C1064,632 1020,668 950,688 C880,706 780,712 700,697 C600,676 480,630 380,572 C280,512 180,462 133,432 C110,402 106,350 108,302 Z" fill="#c9cddd"/>
 </g>
 <g filter="url(#bl1)">
 <!-- ===== right/back sandal ===== -->
 <path d="M437,200 C440,165 490,138 580,130 C660,130 725,148 770,182 L1212,268 C1268,312 1312,385 1322,440 C1326,478 1292,508 1232,525 C1172,540 1100,545 1060,536 L900,440 L700,330 L520,270 C460,250 435,232 437,200 Z" fill="#233345"/>
 <!-- heel top surface -->
 <path d="M450,196 C456,166 500,149 580,144 C650,143 712,158 765,192 L757,250 L575,210 L520,244 C480,236 452,222 450,196 Z" fill="#2d3e52"/>
 <path d="M450,198 C452,222 480,238 520,246" fill="none" stroke="#4a5c70" stroke-width="5" opacity="0.7"/>
 <!-- under arch shadow + toe footbed -->
 <path d="M1000,404 C1050,340 1130,292 1212,270 C1262,312 1300,380 1308,428 C1294,462 1224,482 1150,490 C1090,492 1040,474 1000,444 Z" fill="#18263a"/>
 <path d="M1040,418 C1090,360 1160,320 1236,300 C1272,340 1298,390 1305,428 C1290,460 1222,480 1150,487 C1098,488 1060,470 1030,446 Z" fill="#2b3e54"/>
 <path d="M1020,452 C1060,480 1110,494 1160,492 C1230,486 1296,464 1310,430" fill="none" stroke="#44566b" stroke-width="5" opacity="0.8"/>
 <path d="M1062,512 C1120,522 1200,516 1262,496 C1296,482 1316,462 1320,444" fill="none" stroke="#0f1a28" stroke-width="5" opacity="0.7"/>
 <!-- strap -->
 <path d="M757,242 L768,190 L800,143 L868,97 L930,85 L1000,118 L1212,268 C1130,290 1050,340 1000,404 L900,400 L830,330 Z" fill="url(#strapR)"/>
 <path d="M757,242 L768,190 L800,143 L868,97 L926,86 L890,106 L842,160 L792,226 L776,252 Z" fill="#3a79a8"/>
 <path d="M812,135 L872,100 L862,140 L816,176 Z" fill="#6fa4cb"/>
 <path d="M759,244 L802,216 L890,290 L936,346 L836,330 Z" fill="#3b76a6"/>
 <path d="M802,216 L880,170 L960,196 L900,210 L850,255 Z" fill="#272f4e"/>
 <path d="M905,262 L938,300 L926,382 L882,332 L862,290 Z" fill="#51608a" opacity="0.85"/>
 <path d="M1000,196 L1130,214 L1206,268 L1090,263 L1030,336 Z" fill="#3a4f7a" opacity="0.9"/>
 <path d="M986,236 L1030,340" stroke="#6b7ea6" stroke-width="5" fill="none"/>
 <path d="M1212,268 C1130,290 1050,340 1000,404" fill="none" stroke="#5a6a90" stroke-width="5" opacity="0.7"/>
 <!-- ===== left/front sandal ===== -->
 <path d="M108,302 C112,268 170,240 262,233 C340,233 400,250 462,278 L940,446 C1000,482 1050,540 1060,590 C1064,632 1020,668 950,688 C880,706 780,712 700,697 C600,676 480,630 380,572 C280,512 180,462 133,432 C110,402 106,350 108,302 Z" fill="#223244"/>
 <!-- heel top surface -->
 <path d="M120,300 C130,268 182,250 262,245 C340,245 400,260 456,286 L336,420 L200,357 C150,336 118,322 120,300 Z" fill="#2c3d51"/>
 <path d="M118,304 C122,326 152,340 200,360 L336,424" fill="none" stroke="#46586c" stroke-width="5" opacity="0.75"/>
 <!-- under arch shadow + toe footbed -->
 <path d="M600,596 C680,522 800,470 938,447 C1002,486 1042,542 1048,578 C1032,622 962,648 880,658 C790,665 700,645 640,622 Z" fill="#172539"/>
 <path d="M660,596 C740,538 850,494 962,474 C1010,506 1038,548 1044,578 C1028,618 960,644 880,653 C800,659 720,642 666,622 Z" fill="#2a3d53"/>
 <path d="M560,626 C640,656 760,680 880,664 C970,650 1040,620 1052,580" fill="none" stroke="#43556a" stroke-width="5" opacity="0.8"/>
 <!-- groove -->
 <path d="M112,392 C200,448 330,528 480,598 C600,652 760,688 900,678 C985,668 1046,636 1060,604" stroke="#0e1826" stroke-width="5" fill="none" opacity="0.75"/>
 <!-- strap -->
 <path d="M330,425 L470,276 L560,205 L652,180 L700,196 L830,330 L940,446 C800,466 680,522 600,596 L550,626 L400,545 L334,500 L322,470 Z" fill="url(#strapL)"/>
 <path d="M380,366 L470,280 L560,207 L652,182 L696,198 L740,246 L690,216 L612,236 L526,264 L440,344 L420,388 Z" fill="#3a79a8"/>
 <path d="M576,207 L654,186 L690,216 L612,236 Z" fill="#7caed2"/>
 <path d="M384,364 L470,284 L482,302 L436,346 L416,384 Z" fill="#5f9bcb"/>
 <path d="M700,200 L832,334 L826,346 L690,216 Z" fill="#4a86b8"/>
 <path d="M560,296 L600,286 L690,316 L680,342 L666,400 L640,440 L526,431 L510,410 L540,376 L565,340 Z" fill="#a0c3db"/>
 <path d="M600,290 L690,318 L680,336 L612,318 Z" fill="#4d6288"/>
 <path d="M556,300 L566,340 L540,376 L512,410 L528,430" fill="none" stroke="#cfe2ee" stroke-width="4" opacity="0.8"/>
 <path d="M755,385 L835,436 L740,456 L705,441 Z" fill="#3b79ab"/>
 <path d="M395,465 L446,550 L340,486 Z" fill="#6c819f"/>
 <path d="M515,540 L600,566 L560,612 L530,596 Z" fill="#2f6f9f"/>
 <path d="M482,302 L560,322 L500,420 L480,520 L540,615" stroke="#5d6d95" stroke-width="5" fill="none" opacity="0.7"/>
 <path d="M330,425 L322,470 L334,500 L400,545 L550,626" stroke="#7e96b8" stroke-width="5" fill="none" opacity="0.85"/>
 <path d="M940,446 C800,466 680,522 600,596" fill="none" stroke="#59698f" stroke-width="5" opacity="0.6"/>
 <!-- logo -->
 <g transform="translate(290,347) rotate(8)" fill="none" stroke="#f4f8fb" stroke-width="11">
  <ellipse cx="-17" cy="-2" rx="15" ry="12"/><ellipse cx="16" cy="3" rx="19" ry="15"/>
 </g>
 </g>
</g>
<rect x="365.7" y="117.9" width="471.2" height="707.2" fill="none" stroke="#ffffff" stroke-width="1.1" opacity="0.85"/><rect x="364.35" y="116.55" width="473.9" height="709.9" fill="none" stroke="#262626" stroke-width="1.5"/>
</svg>

<div class="a" style="left:1049px;top:73px;width:7px;height:789px;background:#eeeeee;"></div>
<div class="a" style="left:1049px;top:73px;width:1px;height:789px;background:#dcdcdc;"></div>

<svg style="left:1056px;top:73px" width="288" height="115" viewBox="1056 73 288 115">
<rect x="1056" y="73" width="288" height="115" fill="#a0a0a0"/>
<rect x="1056" y="73" width="19" height="15.5" fill="#a6a6a6" stroke="#b4b4b4" stroke-width="0.8"/>
<path d="M1065.5,74.5 L1072.5,82.5 Q1065.5,88 1058.5,82.5 Z" fill="#ff0000"/>
<rect x="1325" y="73" width="19" height="15.5" fill="#a6a6a6" stroke="#b4b4b4" stroke-width="0.8"/>
<path d="M1335,74.5 L1342.5,82.5 Q1335,88 1327.5,82.5 Z" fill="#000"/>
<!-- main peak -->
<path d="M1290,181.5 C1297,178 1299,168 1300.5,150 L1306,78 L1310,78 L1310,181.5 Z" fill="#f01400"/>
<path d="M1294,181.5 C1300,178 1303,165 1304.5,148 L1309,78 L1315,78 L1315,181.5 Z" fill="#ffee00"/>
<path d="M1299,181.5 C1304,175 1307,160 1309,140 L1313,100 L1314,78 L1326,78 L1326,181.5 Z" fill="#ffffff"/>
<path d="M1314,78 L1318,78 L1318.5,100 L1319,127 L1316,115 Z" fill="#00e6f0"/>
<path d="M1317.5,78 L1321.8,78 L1321,105 L1319.2,126 L1318.5,100 Z" fill="#0a1ee6"/>
<path d="M1322,78 L1324.3,78 L1324.3,88 L1323,92 Z" fill="#ffee00"/>
<path d="M1324.3,78 L1325.6,78 L1325.6,181 L1324.6,181 Z" fill="#30d0f0"/>
<rect x="1325.6" y="89" width="2.8" height="92.5" fill="#0a14e0"/>
<!-- low part -->
<path d="M1068,181.8 L1068,169 L1069.2,176 L1071,179 L1074,180 L1100,180.3 L1121,179.8 C1130,178 1140,176.6 1148,177.2 C1160,176.6 1168,177.2 1180,178.6 C1200,180 1220,180.4 1290,180.6 L1290,181.8 Z" fill="#ffffff"/>
<path d="M1068,180 L1068,168.5 L1069.4,176 L1071.5,178.6 L1074,180 Z" fill="#f01400"/>
<path d="M1118,179.6 C1130,177.6 1138,176.4 1147,176.6 L1147,178.4 C1138,178.6 1130,179.4 1122,180.2 Z" fill="#f01400"/>
<path d="M1143,177.8 C1148,176.6 1152,176.4 1155,176.6 L1155,178.4 L1143,179.2 Z" fill="#ffe000"/>
<path d="M1154,176.6 C1160,176.2 1164,176.6 1168,177.2 L1168,178.6 L1154,178.4 Z" fill="#20c820"/>
<path d="M1167,177.2 C1175,177.8 1185,178.4 1195,179 L1195,180 L1167,178.8 Z" fill="#20d8e8"/>
<path d="M1190,178.6 C1205,179.4 1220,180 1232,180.4 L1232,181 L1190,180 Z" fill="#1a40e0"/>
<rect x="1067.5" y="182" width="265.5" height="2.2" fill="#111"/>
</svg>
<div class="a" style="left:1143px;top:191px;width:1px;height:52px;background:#d8d8d8;"></div>
<div class="a" style="left:1144px;top:191px;width:1px;height:52px;background:#fafafa;"></div>
<div class="t" style="left:1079px;top:194.8px;font-size:11px;color:#222;">R:</div>
<div class="t" style="left:1112px;top:194.3px;font-size:11px;color:#222;">---</div>
<div class="t" style="left:1079px;top:211.5px;font-size:11px;color:#222;">G:</div>
<div class="t" style="left:1112px;top:211px;font-size:11px;color:#222;">---</div>
<div class="t" style="left:1079px;top:228.1px;font-size:11px;color:#222;">B:</div>
<div class="t" style="left:1112px;top:227.6px;font-size:11px;color:#222;">---</div>
<div class="t" style="left:1201px;top:202.20px;font-size:11px;color:#222;letter-spacing:0.567px;">f/11</div>
<div class="t" style="left:1233.6px;top:202.20px;font-size:11px;color:#222;letter-spacing:0.274px;">1/125 s</div>
<div class="t" style="left:1179.8px;top:222.50px;font-size:11px;color:#222;letter-spacing:0.092px;">ISO 100</div>
<div class="t" style="left:1233.6px;top:222.50px;font-size:11px;color:#222;letter-spacing:0.196px;">18-300 bei 37 mm</div>
<div class="a" style="left:1056px;top:246px;width:288px;height:26.6px;background:#cecece;"></div>
<div class="a" style="left:1056px;top:272.6px;width:288px;height:1.4px;background:#e6e6e6;"></div>
<div class="a" style="left:1104px;top:246px;width:22px;height:28px;background:#f0f0f0;"></div>
<svg style="left:1056px;top:246px" width="288" height="28" viewBox="1056 246 288 28"><circle cx="1069.6" cy="259.4" r="7.2" fill="#2b2b2b"/><g transform="translate(1061.6,251.4)" stroke="#cfcfcf" stroke-width="1.1" fill="none"><path d="M8 0.7L10.2 7.4M14.9 5.2L8.8 9.8M12.6 13.6L5.9 9.4M3.4 13.6L5.6 6.9M1.1 5.2H8.9"/></g><circle cx="1069.6" cy="259.4" r="2" fill="#cfcfcf"/><rect x="1085.2" y="253.5" width="15" height="11.6" fill="#e4e4e4" stroke="#2b2b2b" stroke-width="1.5"/><path d="M1085 257.4H1100.4M1085 261.3H1100.4M1090.2 253V265.6M1095.2 253V265.6" stroke="#2b2b2b" stroke-width="1.2"/><path d="M1085.6 264.8L1099.6 253.8" stroke="#2b2b2b" stroke-width="1.7"/><path d="M1107.8 266L1112.9 251.4L1117.4 261.4L1120.8 252.4L1124.4 262H1119.2L1120.6 266Z" fill="#2b2b2b"/><rect x="1131.2" y="252.8" width="14.4" height="12.8" fill="#2b2b2b"/><rect x="1132.4" y="255" width="12" height="3.2" fill="#9a9a9a"/><rect x="1135.8" y="255" width="4.6" height="3.2" fill="#eaeaea"/><rect x="1132.4" y="260.6" width="12" height="3.2" fill="#9a9a9a"/><rect x="1136.4" y="260.6" width="4.6" height="3.2" fill="#eaeaea"/><rect x="1154.7" y="253.5" width="13.4" height="4.2" fill="#e2e2e2" stroke="#2b2b2b" stroke-width="1.4"/><rect x="1154" y="260" width="14.8" height="5.6" fill="#2b2b2b"/><path d="M1179.6 251.6C1177 256 1177 262.8 1179.6 267.2M1189 251.6C1191.6 256 1191.6 262.8 1189 267.2" fill="none" stroke="#2b2b2b" stroke-width="1.9"/><path d="M1181.8 253.2V265.6" stroke="#2b2b2b" stroke-width="1.5"/><rect x="1183.6" y="254" width="3.6" height="10.8" rx="1" fill="none" stroke="#2b2b2b" stroke-width="1.5"/><rect x="1223.9" y="253" width="12.6" height="12.8" fill="#dcdcdc" stroke="#2b2b2b" stroke-width="1.5"/><path d="M1227 252.4V266.4M1233.4 252.4V266.4" stroke="#2b2b2b" stroke-width="1.3"/><path d="M1227 257.4H1233.4M1227 261.6H1233.4" stroke="#2b2b2b" stroke-width="1.2"/><path d="M1223.4 256.2H1227M1223.4 259.4H1227M1223.4 262.6H1227M1233.4 256.2H1237M1233.4 259.4H1237M1233.4 262.6H1237" stroke="#2b2b2b" stroke-width="1"/><path d="M1244.8 254.8H1260M1244.8 259.6H1260M1244.8 264.4H1260" stroke="#2b2b2b" stroke-width="1.5"/><g fill="#cfcfcf" stroke="#2b2b2b" stroke-width="1.3"><circle cx="1255.4" cy="254.8" r="1.9"/><circle cx="1256.6" cy="259.6" r="1.9"/><circle cx="1250" cy="264.4" r="1.9"/></g><rect x="1272" y="256.8" width="11" height="9.4" fill="none" stroke="#6a6a6a" stroke-width="1"/><rect x="1270" y="254.8" width="11" height="9.4" fill="#4a4a4a" stroke="#777" stroke-width="0.8"/><rect x="1268" y="252.8" width="11.4" height="9.8" fill="#2b2b2b"/></svg>
<div class="t" style="left:1199px;top:248.2px;font-size:20px;font-style:italic;color:#2b2b2b;letter-spacing:-0.2px">fx</div>
<div class="t" style="left:1174.3px;top:277.5px;font-size:11px;color:#222;">Details</div>
<svg style="left:1330px;top:278px" width="11" height="9"><path d="M0 1H10M0 3.3H10M0 5.6H10M0 7.9H10" stroke="#555" stroke-width="1.2"/></svg>
<div class="a" style="left:1057px;top:291px;width:287px;height:1px;background:#c4c4c4;"></div>
<div class="a" style="left:1057px;top:292px;width:287px;height:1px;background:#fbfbfb;"></div>
<div class="t" style="left:1050px;width:300px;text-align:center;top:304.5px;font-size:11px;color:#222">Sch&auml;rfen</div>
<div class="t" style="left:1046.5px;width:300px;text-align:center;top:481.5px;font-size:11px;color:#222">Rauschreduzierung</div>
<div class="t" style="left:1076px;top:325.5px;font-size:11px;color:#222;">Betrag</div>
<div class="a" style="left:1279px;top:320px;width:46px;height:20px;background:#fff;border:1px solid #d2d2d2;"></div>
<div class="t" style="left:1284px;top:325.3px;font-size:11px;color:#222;">91</div>
<div class="a" style="left:1074px;top:345.6px;width:253px;height:1px;background:#bdbdbd;"></div>
<div class="a" style="left:1074px;top:346.6px;width:253px;height:1px;background:#dedede;"></div>
<div class="a" style="left:1074px;top:347.6px;width:253px;height:1px;background:#fbfbfb;"></div>
<svg style="left:1220.8px;top:341.0px" width="12" height="13"><path d="M6 0.7L11.3 5.7V11.2H0.7V5.7Z" fill="#f1f1f1" stroke="#a6a6a6" stroke-width="1.15" stroke-linejoin="round"/></svg>
<div class="t" style="left:1076px;top:360.9px;font-size:11px;color:#222;">Radius</div>
<div class="a" style="left:1279px;top:355px;width:46px;height:20px;background:#fff;border:1px solid #d2d2d2;"></div>
<div class="t" style="left:1284px;top:360.7px;font-size:11px;color:#222;">2,5</div>
<div class="a" style="left:1074px;top:381px;width:253px;height:1px;background:#bdbdbd;"></div>
<div class="a" style="left:1074px;top:382px;width:253px;height:1px;background:#dedede;"></div>
<div class="a" style="left:1074px;top:383px;width:253px;height:1px;background:#fbfbfb;"></div>
<svg style="left:1268px;top:376.4px" width="12" height="13"><path d="M6 0.7L11.3 5.7V11.2H0.7V5.7Z" fill="#f1f1f1" stroke="#a6a6a6" stroke-width="1.15" stroke-linejoin="round"/></svg>
<div class="t" style="left:1076px;top:396.2px;font-size:11px;color:#222;">Detail</div>
<div class="a" style="left:1279px;top:390px;width:46px;height:20px;background:#fff;border:1px solid #d2d2d2;"></div>
<div class="t" style="left:1284px;top:396.0px;font-size:11px;color:#222;">20</div>
<div class="a" style="left:1074px;top:416.3px;width:253px;height:1px;background:#bdbdbd;"></div>
<div class="a" style="left:1074px;top:417.3px;width:253px;height:1px;background:#dedede;"></div>
<div class="a" style="left:1074px;top:418.3px;width:253px;height:1px;background:#fbfbfb;"></div>
<svg style="left:1119px;top:411.7px" width="12" height="13"><path d="M6 0.7L11.3 5.7V11.2H0.7V5.7Z" fill="#f1f1f1" stroke="#a6a6a6" stroke-width="1.15" stroke-linejoin="round"/></svg>
<div class="t" style="left:1076px;top:431.5px;font-size:11px;color:#222;">Maskieren</div>
<div class="a" style="left:1279px;top:426px;width:46px;height:20px;background:#fff;border:1px solid #d2d2d2;"></div>
<div class="t" style="left:1284px;top:431.3px;font-size:11px;color:#222;">0</div>
<div class="a" style="left:1074px;top:451.6px;width:253px;height:1px;background:#bdbdbd;"></div>
<div class="a" style="left:1074px;top:452.6px;width:253px;height:1px;background:#dedede;"></div>
<div class="a" style="left:1074px;top:453.6px;width:253px;height:1px;background:#fbfbfb;"></div>
<svg style="left:1069.3px;top:447.0px" width="12" height="13"><path d="M6 0.7L11.3 5.7V11.2H0.7V5.7Z" fill="#f1f1f1" stroke="#a6a6a6" stroke-width="1.15" stroke-linejoin="round"/></svg>
<div class="a" style="left:1070px;top:470px;width:262px;height:1px;background:#cfcfcf;"></div>
<div class="a" style="left:1070px;top:471px;width:262px;height:1px;background:#fbfbfb;"></div>
<div class="t" style="left:1076px;top:503.2px;font-size:11px;color:#222;">Luminanz</div>
<div class="a" style="left:1279px;top:497px;width:46px;height:20px;background:#fff;border:1px solid #d2d2d2;"></div>
<div class="t" style="left:1284px;top:503.0px;font-size:11px;color:#222;">42</div>
<div class="a" style="left:1074px;top:523.3px;width:253px;height:1px;background:#bdbdbd;"></div>
<div class="a" style="left:1074px;top:524.3px;width:253px;height:1px;background:#dedede;"></div>
<div class="a" style="left:1074px;top:525.3px;width:253px;height:1px;background:#fbfbfb;"></div>
<svg style="left:1174px;top:518.6999999999999px" width="12" height="13"><path d="M6 0.7L11.3 5.7V11.2H0.7V5.7Z" fill="#f1f1f1" stroke="#a6a6a6" stroke-width="1.15" stroke-linejoin="round"/></svg>
<div class="t" style="left:1076px;top:538.5px;font-size:11px;color:#222;">Luminanzdetails</div>
<div class="a" style="left:1279px;top:533px;width:46px;height:20px;background:#fff;border:1px solid #d2d2d2;"></div>
<div class="t" style="left:1284px;top:538.3000000000001px;font-size:11px;color:#222;">3</div>
<div class="a" style="left:1074px;top:558.6px;width:253px;height:1px;background:#bdbdbd;"></div>
<div class="a" style="left:1074px;top:559.6px;width:253px;height:1px;background:#dedede;"></div>
<div class="a" style="left:1074px;top:560.6px;width:253px;height:1px;background:#fbfbfb;"></div>
<svg style="left:1076.3px;top:554.0px" width="12" height="13"><path d="M6 0.7L11.3 5.7V11.2H0.7V5.7Z" fill="#f1f1f1" stroke="#a6a6a6" stroke-width="1.15" stroke-linejoin="round"/></svg>
<div class="t" style="left:1076px;top:573.6999999999999px;font-size:11px;color:#222;">Luminanzkontrast</div>
<div class="a" style="left:1279px;top:568px;width:46px;height:20px;background:#fff;border:1px solid #d2d2d2;"></div>
<div class="t" style="left:1284px;top:573.5px;font-size:11px;color:#222;">3</div>
<div class="a" style="left:1074px;top:593.8px;width:253px;height:1px;background:#bdbdbd;"></div>
<div class="a" style="left:1074px;top:594.8px;width:253px;height:1px;background:#dedede;"></div>
<div class="a" style="left:1074px;top:595.8px;width:253px;height:1px;background:#fbfbfb;"></div>
<svg style="left:1076.3px;top:589.1999999999999px" width="12" height="13"><path d="M6 0.7L11.3 5.7V11.2H0.7V5.7Z" fill="#f1f1f1" stroke="#a6a6a6" stroke-width="1.15" stroke-linejoin="round"/></svg>
<div class="t" style="left:1076px;top:608.6999999999999px;font-size:11px;color:#222;">Farbe</div>
<div class="a" style="left:1279px;top:603px;width:46px;height:20px;background:#fff;border:1px solid #d2d2d2;"></div>
<div class="t" style="left:1284px;top:608.5px;font-size:11px;color:#222;">25</div>
<div class="a" style="left:1074px;top:628.8px;width:253px;height:1px;background:#bdbdbd;"></div>
<div class="a" style="left:1074px;top:629.8px;width:253px;height:1px;background:#dedede;"></div>
<div class="a" style="left:1074px;top:630.8px;width:253px;height:1px;background:#fbfbfb;"></div>
<svg style="left:1131.6px;top:624.1999999999999px" width="12" height="13"><path d="M6 0.7L11.3 5.7V11.2H0.7V5.7Z" fill="#f1f1f1" stroke="#a6a6a6" stroke-width="1.15" stroke-linejoin="round"/></svg>
<div class="t" style="left:1076px;top:643.8px;font-size:11px;color:#222;">Farbdetails</div>
<div class="a" style="left:1279px;top:638px;width:46px;height:20px;background:#fff;border:1px solid #d2d2d2;"></div>
<div class="t" style="left:1284px;top:643.6px;font-size:11px;color:#222;">50</div>
<div class="a" style="left:1074px;top:663.9px;width:253px;height:1px;background:#bdbdbd;"></div>
<div class="a" style="left:1074px;top:664.9px;width:253px;height:1px;background:#dedede;"></div>
<div class="a" style="left:1074px;top:665.9px;width:253px;height:1px;background:#fbfbfb;"></div>
<svg style="left:1193.7px;top:659.3px" width="12" height="13"><path d="M6 0.7L11.3 5.7V11.2H0.7V5.7Z" fill="#f1f1f1" stroke="#a6a6a6" stroke-width="1.15" stroke-linejoin="round"/></svg>
<div class="t" style="left:1076px;top:679.0px;font-size:11px;color:#222;">Farbgl&auml;ttung</div>
<div class="a" style="left:1279px;top:673px;width:46px;height:20px;background:#fff;border:1px solid #d2d2d2;"></div>
<div class="t" style="left:1284px;top:678.8000000000001px;font-size:11px;color:#222;">50</div>
<div class="a" style="left:1074px;top:699.1px;width:253px;height:1px;background:#bdbdbd;"></div>
<div class="a" style="left:1074px;top:700.1px;width:253px;height:1px;background:#dedede;"></div>
<div class="a" style="left:1074px;top:701.1px;width:253px;height:1px;background:#fbfbfb;"></div>
<svg style="left:1193.7px;top:694.5px" width="12" height="13"><path d="M6 0.7L11.3 5.7V11.2H0.7V5.7Z" fill="#f1f1f1" stroke="#a6a6a6" stroke-width="1.15" stroke-linejoin="round"/></svg>
<div class="a" style="left:1057px;top:782px;width:286px;height:1px;background:#d0d0d0;"></div>
<div class="a" style="left:1057px;top:783px;width:286px;height:1px;background:#fbfbfb;"></div>
<div class="t" style="left:1075px;top:805.4px;font-size:10.3px;color:#222;">F&uuml;r eine pr&auml;zisere Vorschau w&auml;hrend der Bearbeitung</div>
<div class="t" style="left:1075px;top:817.9px;font-size:10.3px;color:#222;">von Bildern in diesem Bedienfeld den Zoomfaktor f&uuml;r</div>
<div class="t" style="left:1075px;top:830.4px;font-size:10.3px;color:#222;">die Vorschau auf 100 % oder h&ouml;her setzen.</div>
<div class="a" style="left:159px;top:77px;width:29px;height:26px;background:#c6c6c6;"></div>
<svg style="left:162.0px;top:79.0px" width="22" height="22" viewBox="0 0 22 22"><circle cx="9.2" cy="7.7" r="5.4" fill="none" stroke="#1e1e1e" stroke-width="1.5"/><path d="M13.4 12L18 16.6" stroke="#1e1e1e" stroke-width="2.2" stroke-linecap="round"/><path d="M9.4 4.6A3.2 3.2 0 0 1 12.4 7.4" stroke="#1e1e1e" stroke-width="0.9" fill="none"/></svg>
<svg style="left:191.5px;top:79.0px" width="22" height="22" viewBox="0 0 22 22"><path d="M7.2 11V4.4a1.1 1.1 0 0 1 2.2 0V10M9.4 9.6V2.9a1.1 1.1 0 0 1 2.2 0V9.6M11.6 9.8V3.7a1.1 1.1 0 0 1 2.2 0V10.2M13.8 10.6V5.8a1.1 1.1 0 0 1 2.2 0V13c0 4-2 6.2-5.2 6.2c-2.6 0-3.8-1.2-5-3.2L3.2 11.8c-.6-1.1 .8-2 1.7-1L7.2 13.4" fill="none" stroke="#1e1e1e" stroke-width="1.25" stroke-linejoin="round"/></svg>
<svg style="left:232.0px;top:79.0px" width="22" height="22" viewBox="0 0 22 22"><g transform="translate(0,0)"><path d="M5.6 17L13 9.6" stroke="#1e1e1e" stroke-width="4.6" stroke-linecap="round"/><path d="M5.7 16.9L12.4 10.2" stroke="#9a9a9a" stroke-width="2" stroke-linecap="round"/><path d="M11.6 6.6L16.4 11.4" stroke="#1e1e1e" stroke-width="3.2" stroke-linecap="butt"/><path d="M14.6 8.4L17.6 5.4" stroke="#1e1e1e" stroke-width="4.2" stroke-linecap="round"/></g></svg>
<svg style="left:259.0px;top:79.0px" width="26" height="22" viewBox="0 0 26 22"><g transform="translate(5,0)"><path d="M5.6 17L13 9.6" stroke="#1e1e1e" stroke-width="4.6" stroke-linecap="round"/><path d="M5.7 16.9L12.4 10.2" stroke="#f4f4f4" stroke-width="2" stroke-linecap="round"/><path d="M11.6 6.6L16.4 11.4" stroke="#1e1e1e" stroke-width="3.2" stroke-linecap="butt"/><path d="M14.6 8.4L17.6 5.4" stroke="#1e1e1e" stroke-width="4.2" stroke-linecap="round"/></g><path d="M6.5 2.4L7.7 5.4L10.7 6.6L7.7 7.8L6.5 10.8L5.3 7.8L2.3 6.6L5.3 5.4Z" fill="none" stroke="#1e1e1e" stroke-width="1"/></svg>
<svg style="left:291.0px;top:79.0px" width="24" height="22" viewBox="0 0 24 22"><circle cx="14.2" cy="12.2" r="4.5" fill="none" stroke="#1e1e1e" stroke-width="1.5"/><circle cx="14.2" cy="12.2" r="1.7" fill="#1e1e1e"/><path d="M5.7 3.2V11.2M1.7 7.2H9.7" stroke="#1e1e1e" stroke-width="1.1" stroke-dasharray="2.6 1.4"/><path d="M18.5 17h4l-2 2.2z" fill="#1e1e1e"/></svg>
<svg style="left:328px;top:76px" width="30" height="26" viewBox="328 76 30 26"><path d="M337 80.4V93.5H344M334.6 84H346.2V96.6" fill="none" stroke="#1e1e1e" stroke-width="1.7"/><path d="M331.8 84h1.6M347.4 93.5h1.6" stroke="#1e1e1e" stroke-width="1.7"/><path d="M350 96h4.2l-2.1 2.3z" fill="#1e1e1e"/></svg>
<svg style="left:360px;top:78px" width="26" height="22" viewBox="360 78 26 22"><rect x="364.6" y="88.6" width="16.8" height="6.8" fill="#8c8c8c" stroke="#3a3a3a" stroke-width="1.2"/><path d="M369 88.6H377V91a4 2.6 0 0 1 -8 0Z" fill="#f4f4f4" stroke="#3a3a3a" stroke-width="0.9"/><path d="M364.6 93.2H381.4" stroke="#3a3a3a" stroke-width="0.9"/><path d="M366.8 87A7 6 0 0 1 379.4 87" fill="none" stroke="#555" stroke-width="1.2" stroke-dasharray="1.5 1.7"/></svg>
<svg style="left:394px;top:78px" width="20" height="24" viewBox="394 78 20 24"><path d="M398.6 82.6L408.8 84.4V94.6L398.6 97.4Z" fill="none" stroke="#1e1e1e" stroke-width="1.3"/><path d="M402 83.2V96.5M405.4 83.8V95.6M398.6 87.5L408.8 88M398.6 92.4L408.8 91.4" stroke="#444" stroke-width="0.8"/><g fill="#f0f0f0" stroke="#1e1e1e" stroke-width="1"><circle cx="398.6" cy="82.6" r="1.4"/><circle cx="408.8" cy="84.4" r="1.4"/><circle cx="408.8" cy="94.6" r="1.4"/><circle cx="398.6" cy="97.4" r="1.4"/></g></svg>
<svg style="left:432px;top:78px" width="24" height="24" viewBox="432 78 24 24"><path d="M451.8 82.2L445.4 93.4L442.6 91.6Z" fill="#1e1e1e" stroke="#1e1e1e" stroke-width="1" stroke-linejoin="round"/><path d="M444.8 94.2L442 92.2C439.4 93 440 96 437 97.8C440.6 99.2 444.4 98 444.8 94.2Z" fill="#1e1e1e"/><circle cx="440" cy="83.4" r="1.1" fill="#7a7a7a"/><circle cx="435.8" cy="90" r="1.2" fill="#666"/><circle cx="449.6" cy="95.2" r="1.3" fill="#777"/><circle cx="437.4" cy="86.4" r="0.6" fill="#999"/></svg>
<svg style="left:460px;top:78px" width="28" height="22" viewBox="460 78 28 22"><path d="M466.7 81.8V90.6M462.3 86.2H471.1" stroke="#1e1e1e" stroke-width="1.2"/><path d="M470.6 92.2C473.6 87.8 480.2 87.8 483.3 92.2C480.2 96.4 473.6 96.4 470.6 92.2Z" fill="#1e1e1e"/><circle cx="477" cy="92" r="2.4" fill="#f0f0f0"/><circle cx="477" cy="92" r="1.4" fill="#1e1e1e"/></svg>
<svg style="left:494px;top:78px" width="22" height="24" viewBox="494 78 22 24"><path d="M511.8 82L505.2 93.2L502.4 91.4Z" fill="#1e1e1e" stroke="#1e1e1e" stroke-width="1" stroke-linejoin="round"/><path d="M504.6 94L501.8 92C499.2 92.8 499.8 95.8 497 97.4C500.4 99 504.2 97.8 504.6 94Z" fill="#1e1e1e"/></svg>
<div class="a" style="left:528px;top:82px;width:12px;height:16px;border:1.3px solid #1e1e1e;background:linear-gradient(#333,#999 45%,#f4f4f4)"></div>
<svg style="left:556.6px;top:81.0px" width="14" height="18" viewBox="0 0 14 18"><ellipse cx="7" cy="9" rx="5.4" ry="7.4" fill="none" stroke="#1e1e1e" stroke-width="1.4"/></svg>
<svg style="left:590px;top:80px" width="22" height="18" viewBox="590 80 22 18"><path d="M596.4 85H608.4M596.4 89.15H608.4M596.4 93.3H608.4" stroke="#333" stroke-width="1.5"/><path d="M592 85H594.2M592 89.15H594.2M592 93.3H594.2" stroke="#222" stroke-width="1.7"/></svg>
<svg style="left:618px;top:76px" width="24" height="26" viewBox="618 76 24 26"><path d="M629.46 84.32A6.2 6.2 0 1 1 624.01 88.90" fill="none" stroke="#1e1e1e" stroke-width="1.5"/><path d="M623.8 84.4L630 80.8V88Z" fill="#1e1e1e"/></svg>
<svg style="left:644px;top:76px" width="24" height="26" viewBox="644 76 24 26"><path d="M656.54 84.32A6.2 6.2 0 1 0 661.99 88.90" fill="none" stroke="#1e1e1e" stroke-width="1.5"/><path d="M662.2 84.4L656 80.8V88Z" fill="#1e1e1e"/></svg>
<svg style="left:1021.0px;top:80.5px" width="21" height="18" viewBox="0 0 21 18"><path d="M14 6.2V1.8a.8 .8 0 0 0 -.8 -.8H1.8a.8 .8 0 0 0 -.8 .8V16.2a.8 .8 0 0 0 .8 .8H13.2a.8 .8 0 0 0 .8 -.8V12.6" fill="none" stroke="#151515" stroke-width="1.4"/><rect x="1.4" y="1.6" width="12.2" height="1.8" fill="#8a8a8a"/><path d="M1 4H14" stroke="#151515" stroke-width="1.1"/><path d="M9.4 9.2H19.4" stroke="#111" stroke-width="1.9"/><path d="M8 9.2L11.2 6.4V12ZM20.6 9.2L17.4 6.4V12Z" fill="#111"/></svg>
<div class="a" style="left:165px;top:844px;width:12px;height:12px;background:#fafafa;border:1.2px solid #2a2a2a;"></div>
<div class="a" style="left:168px;top:849.3px;width:6px;height:1.4px;background:#222;"></div>
<div class="a" style="left:182px;top:844px;width:12px;height:12px;background:#fafafa;border:1.2px solid #2a2a2a;"></div>
<div class="a" style="left:185px;top:849.3px;width:6px;height:1.4px;background:#222;"></div>
<div class="a" style="left:187.3px;top:847px;width:1.4px;height:6px;background:#222;"></div>
<div class="a" style="left:199px;top:841px;width:57px;height:17px;background:#e6e6e6;border:1px solid #dcdcdc;"></div>
<div class="a" style="left:256px;top:841px;width:18px;height:17px;background:#fafafa;border:1px solid #dcdcdc;border-left:none;"></div>
<div class="t" style="left:217px;top:844px;font-size:11px;color:#222;">25%</div>
<svg style="left:260px;top:846px" width="10" height="7"><path d="M1.2 1.2L5 5L8.8 1.2" fill="none" stroke="#444" stroke-width="1.2"/></svg>
<div class="t" style="left:452.8px;top:843.70px;font-size:11px;color:#222;letter-spacing:0.146px;">Onlineshop_29.04.2019-294.cr2</div>
<div class="a" style="left:946.4px;top:839.4px;width:20.8px;height:16.6px;background:#f6f6f6;border:1.3px solid #222;border-radius:1.5px;"></div>
<div class="t" style="left:951.6px;top:840.86px;font-size:14.2px;color:#1a1a1a;letter-spacing:0.729px;">Y</div>
<svg style="left:961.4px;top:852px" width="6" height="4"><path d="M0 0H5.4L2.7 3.2Z" fill="#222"/></svg>
<div class="a" style="left:973.2px;top:839.4px;width:20.8px;height:16.6px;background:#ebebeb;border:1px solid #d6d6d6;"></div>
<div class="a" style="left:996px;top:839.4px;width:20.8px;height:16.6px;background:#ebebeb;border:1px solid #d6d6d6;"></div>
<svg style="left:973px;top:839px" width="22" height="18" viewBox="973 839 22 18"><g fill="#c9c9c9" stroke="#c9c9c9" stroke-width="1.2"><path d="M980 844.2H986M985 842L988.6 844.2L985 846.4ZM987.4 850.8H981.4M982.4 848.6L978.8 850.8L982.4 853Z"/></g></svg>
<svg style="left:996px;top:839px" width="22" height="18" viewBox="996 839 22 18"><g fill="#c9c9c9" stroke="#c9c9c9" stroke-width="1.2"><path d="M1010.6 847.6H1005M1006 844.6L1001.4 847.6L1006 850.6Z"/></g><path d="M1006.4 840V856" stroke="#dedede" stroke-width="1"/></svg>
<svg style="left:1022px;top:838px" width="22" height="20" viewBox="1022 838 22 20"><path d="M1024 842.6H1041.8M1024 847.8H1041.8M1024 853H1041.8" stroke="#111" stroke-width="1.8"/><g fill="#f4f4f4" stroke="#111" stroke-width="1.3"><circle cx="1030.5" cy="842.6" r="1.9"/><circle cx="1037" cy="847.8" r="1.9"/><circle cx="1028.4" cy="853" r="1.9"/></g></svg>
<div class="a" style="left:169px;top:880px;width:107px;height:27px;border:1.2px solid #b4b4b4;border-radius:13.5px;background:#f2f2f2;text-align:center;line-height:24.6px;font-size:12.3px;color:#222;white-space:nowrap">Bild speichern...</div>
<div class="a" style="left:1012px;top:880px;width:99px;height:27px;border:1.2px solid #4a4a4a;border-radius:13.5px;background:#f2f2f2;text-align:center;line-height:24.6px;font-size:12.6px;color:#222;white-space:nowrap">Objekt &ouml;ffnen</div>
<div class="a" style="left:1136.5px;top:880px;width:95px;height:27px;border:1.2px solid #b4b4b4;border-radius:13.5px;background:#f2f2f2;text-align:center;line-height:24.6px;font-size:12.3px;color:#222;white-space:nowrap">Abbrechen</div>
<div class="a" style="left:1257.5px;top:880px;width:72.5px;height:27px;border:1.2px solid #b4b4b4;border-radius:13.5px;background:#f2f2f2;text-align:center;line-height:24.6px;font-size:12.6px;color:#222;white-space:nowrap">Fertig</div>
<div class="t" style="left:581.6px;top:886.80px;font-size:11.2px;color:#222;letter-spacing:0.070px;text-decoration:underline;">sRGB IEC61966-2.1; 8 Bit; 3648 x 5472 (20,0 MP); 300 ppi</div>
<svg style="left:1376px;top:46px" width="24" height="24" viewBox="1376 46 24 24"><circle cx="1386.6" cy="57.2" r="5.9" fill="none" stroke="#222" stroke-width="1.7"/><path d="M1391 61.8L1395.6 66.6" stroke="#222" stroke-width="2" stroke-linecap="round"/></svg>
<svg style="left:1410px;top:48px" width="26" height="22" viewBox="1410 48 26 22"><rect x="1414.2" y="51.6" width="17.6" height="13.6" rx="1" fill="#f6f6f6" stroke="#222" stroke-width="1.5"/><rect x="1416.6" y="54.6" width="3" height="7.8" fill="none" stroke="#222" stroke-width="1"/><path d="M1417 57H1419M1417 59.6H1419" stroke="#222" stroke-width="0.8"/></svg>
<svg style="left:1443px;top:52px" width="12" height="12" viewBox="1443 52 12 12"><path d="M1445 56.2L1448.6 59.8L1452.2 56.2" fill="none" stroke="#555" stroke-width="1.1"/></svg>
<svg style="left:1462px;top:44px" width="28" height="26" viewBox="1462 44 28 26"><path d="M1471.4 55H1467.6V66H1484.2V55H1480.4" fill="none" stroke="#222" stroke-width="1.7"/><path d="M1476 61.4V49.6" stroke="#222" stroke-width="1.7"/><path d="M1476 46.8L1480 51.6H1472Z" fill="#222"/></svg>
<div class="a" style="left:1356px;top:77px;width:139px;height:869px;background:#f3f3f3;"></div>
<div class="a" style="left:1495px;top:38px;width:1px;height:54px;background:#fbfbfb;"></div>
<div class="a" style="left:1496px;top:77px;width:4px;height:869px;background:#eeeeee;"></div>
<div class="a" style="left:1356px;top:77px;width:139px;height:14.5px;background:#d9d9d9;"></div>
<svg style="left:1478px;top:79px" width="12" height="10" viewBox="1478 79 12 10"><path d="M1480 81.4L1482.6 84.2L1480 87M1484.4 81.4L1487 84.2L1484.4 87" fill="none" stroke="#333" stroke-width="1.2"/></svg>
<div class="a" style="left:1356px;top:91.5px;width:139px;height:1.2px;background:#b9b9b9;"></div>
<div class="a" style="left:1356px;top:92.7px;width:139px;height:30px;background:#dddddd;"></div>
<div class="a" style="left:1380.4px;top:93px;width:1px;height:29.5px;background:#d0d0d0;"></div>
<div class="a" style="left:1381.4px;top:93px;width:1px;height:29.5px;background:#e8e8e8;"></div>
<div class="a" style="left:1449.4px;top:93px;width:1px;height:29.5px;background:#d0d0d0;"></div>
<div class="a" style="left:1450.4px;top:93px;width:1px;height:29.5px;background:#e8e8e8;"></div>
<div class="t" style="left:1356.4px;top:100.61px;font-size:11.6px;color:#4a4a4a;letter-spacing:-0.163px;font-weight:bold;">chaf</div>
<div class="t" style="left:1389.6px;top:100.61px;font-size:11.6px;color:#5a5a5a;letter-spacing:-0.011px;font-weight:bold;">Korrekture</div>
<svg style="left:1476.5px;top:104.4px" width="12" height="8" viewBox="1476.5 104.4 12 8"><path d="M1476.5 105.10000000000001H1488.0M1476.5 107.30000000000001H1488.0M1476.5 109.5H1488.0M1476.5 111.7H1488.0" stroke="#666" stroke-width="1.1"/></svg>
<svg style="left:1356px;top:130px" width="62" height="273" viewBox="1356 130 62 273"><defs><linearGradient id="nbg" x1="0" y1="0" x2="0" y2="1"><stop offset="0" stop-color="#e9ecef"/><stop offset="0.45" stop-color="#eef1f5"/><stop offset="0.8" stop-color="#f6f6f9"/><stop offset="1" stop-color="#fafafb"/></linearGradient><filter id="nb"><feGaussianBlur stdDeviation="0.5"/></filter></defs>
<rect x="1356" y="133" width="59" height="267" fill="url(#nbg)"/>
<g filter="url(#nb)"><path d="M1356 296.5L1372 303L1381 309C1386 314 1388 320 1386.5 323.5C1384 328 1374 331 1364 331L1356 346Z" fill="#1f2d40"/>
<path d="M1356 297L1368 302L1379 308.5C1372 311 1366 316 1362 322L1356 320Z" fill="#363d5c"/>
<path d="M1356 325C1362 327 1366 331 1366 336C1365 341 1361 345 1356 347Z" fill="#1d2a3b"/>
<path d="M1356 304L1362 306L1358 316L1356 316Z" fill="#3e78a8"/></g>
<path d="M1356 132H1415.8V400.5H1356" fill="none" stroke="#e0453c" stroke-width="2"/></svg>
<div class="a" style="left:1356px;top:417.5px;width:77.5px;height:3px;background:#c6c6c6;border-radius:0 1.5px 1.5px 0;"></div>
<svg style="left:1446px;top:414px" width="20" height="12" viewBox="1446 414 20 12"><path d="M1447 424.8L1453.2 418L1455.8 420.6L1458.6 416.2L1465.2 424.8Z" fill="#1e1e1e"/></svg>
<div class="a" style="left:1356px;top:436.6px;width:139px;height:1.2px;background:#b9b9b9;"></div>
<div class="a" style="left:1356px;top:437.8px;width:139px;height:32px;background:#dcdcdc;"></div>
<svg style="left:1476.5px;top:451.6px" width="12" height="8" viewBox="1476.5 451.6 12 8"><path d="M1476.5 452.3H1488.0M1476.5 454.5H1488.0M1476.5 456.70000000000005H1488.0M1476.5 458.90000000000003H1488.0" stroke="#666" stroke-width="1.1"/></svg>
<div class="a" style="left:1356px;top:470px;width:121px;height:168px;background:#f3f3f3;"></div>
<div class="a" style="left:1356px;top:521.3px;width:121px;height:1px;background:#e3e3e3;"></div>
<div class="a" style="left:1356px;top:545px;width:121px;height:1px;background:#e3e3e3;"></div>
<div class="a" style="left:1356px;top:568.6px;width:121px;height:1px;background:#e3e3e3;"></div>
<div class="a" style="left:1356px;top:592.2px;width:121px;height:1px;background:#e3e3e3;"></div>
<div class="a" style="left:1356px;top:615.4px;width:121px;height:1px;background:#e3e3e3;"></div>
<div class="a" style="left:1356px;top:470px;width:121px;height:168px;overflow:hidden"><div class="t" style="left:-2.2px;top:35.0px;font-size:11px;color:#333">FF</div><div class="t" style="left:-3.6px;top:58.0px;font-size:11px;color:#333">G</div><div class="t" style="left:0.2px;top:80.64px;font-size:11px;color:#333;letter-spacing:0.194px;">ke auf Originalebene</div><div class="t" style="left:-2.4px;top:105.19999999999993px;font-size:11px;color:#333">d 1</div><div class="t" style="left:-2.6px;top:129.0px;font-size:11px;color:#333">fad</div></div>
<div class="a" style="left:1477.4px;top:472px;width:16.2px;height:166px;background:#e4e4e4;"></div>
<svg style="left:1479px;top:482px" width="14" height="10" viewBox="1479 482 14 10"><path d="M1481.6 489L1485.6 485L1489.6 489" fill="none" stroke="#777" stroke-width="1.1"/></svg>
<div class="a" style="left:1479px;top:494.8px;width:13px;height:10.6px;background:#c1c1c1;"></div>
<svg style="left:1479px;top:621px" width="14" height="10" viewBox="1479 621 14 10"><path d="M1481.6 623.6L1485.6 627.6L1489.6 623.6" fill="none" stroke="#777" stroke-width="1.1"/></svg>
<div class="a" style="left:1356px;top:637.6px;width:139px;height:1px;background:#dcdcdc;"></div>
<svg style="left:1356px;top:640px" width="139" height="26" viewBox="1356 640 139 26"><path d="M1377 657.8V646.4H1382.2L1383.8 648.4H1391.2V657.8Z" fill="#d8d8d8" stroke="#333" stroke-width="1.3" stroke-linejoin="round"/><path d="M1416.6 646.4H1426.6V658.0H1421.0L1416.6 653.6Z" fill="#f6f6f6" stroke="#222" stroke-width="1.5" stroke-linejoin="round"/><path d="M1416.6 653.6H1421.0V658.0" fill="#888" stroke="#222" stroke-width="1.1"/><path d="M1451.4 648.2H1460.6V657.6a1 1 0 0 1 -1 1H1452.4a1 1 0 0 1 -1 -1Z" fill="none" stroke="#a8a8a8" stroke-width="1.2"/><path d="M1450 648.0H1462M1454 647.6V645.6H1458V647.6M1454.2 650.6V656.2M1456 650.6V656.2M1457.8 650.6V656.2" fill="none" stroke="#a8a8a8" stroke-width="1.1"/></svg>
<div class="a" style="left:1356px;top:667px;width:139px;height:1.2px;background:#b9b9b9;"></div>
<div class="a" style="left:1356px;top:668.2px;width:139px;height:31.4px;background:#dcdcdc;"></div>
<svg style="left:1476.5px;top:679.8px" width="12" height="8" viewBox="1476.5 679.8 12 8"><path d="M1476.5 680.5H1488.0M1476.5 682.6999999999999H1488.0M1476.5 684.9H1488.0M1476.5 687.0999999999999H1488.0" stroke="#666" stroke-width="1.1"/></svg>
<div class="a" style="left:1356px;top:699.6px;width:139px;height:246px;background:#f1f1f1;"></div>
<svg style="left:1356px;top:708px" width="139" height="26" viewBox="1356 708 139 26"><path d="M1360 715.2H1372V718.6H1370.8L1370.4 716.8H1367V726L1369 726.4V727.6H1363V726.4L1365 726V716.8H1361.6L1361.2 718.6H1360Z" fill="#777"/><rect x="1388.6" y="716.2" width="10.6" height="10.6" fill="none" stroke="#777" stroke-width="1.2"/><g fill="#f1f1f1" stroke="#777" stroke-width="1"><rect x="1387" y="714.6" width="3" height="3"/><rect x="1397.8" y="714.6" width="3" height="3"/><rect x="1387" y="725.4" width="3" height="3"/><rect x="1397.8" y="725.4" width="3" height="3"/></g><path d="M1420.6 715H1426L1428.6 717.6V725.4H1420.6Z" fill="#f1f1f1" stroke="#777" stroke-width="1.1"/><path d="M1417 719.4H1424.6V728H1417Z" fill="#ddd" stroke="#777" stroke-width="1.1"/><rect x="1418.8" y="722.6" width="2.6" height="2.6" fill="#777"/><circle cx="1466" cy="716" r="4.6" fill="#8a8a8a"/><rect x="1462.6" y="720.8" width="7" height="8" rx="1" fill="#f8f8f8"/></svg>
<div class="a" style="left:1356px;top:737.6px;width:139px;height:1px;background:#dcdcdc;"></div>
<div class="a" style="left:1356px;top:770px;width:139px;height:1px;background:#e0e0e0;"></div>
<div class="a" style="left:1409px;top:745px;width:44.5px;height:18.6px;background:#fcfcfc;border:1px solid #e2e2e2;"></div>
<div class="a" style="left:1453.5px;top:745px;width:16.5px;height:18.6px;background:#fafafa;border:1px solid #e2e2e2;border-left:none;"></div>
<div class="a" style="left:1409px;top:777.6px;width:44.5px;height:18px;background:#fcfcfc;border:1px solid #e2e2e2;"></div>
<div class="a" style="left:1453.5px;top:777.6px;width:16.5px;height:18px;background:#fafafa;border:1px solid #e2e2e2;border-left:none;"></div>
<div class="t" style="left:1352.4px;top:748.35px;font-size:11.8px;color:#a6a6a6;letter-spacing:-0.271px;">Deckkraft:</div>
<div class="a" style="left:1346.2px;top:740px;width:9.8px;height:28px;background:#f0f0f0;"></div>
<div class="t" style="left:1367.4px;top:780.35px;font-size:11.8px;color:#a6a6a6;letter-spacing:-0.471px;">Fl&auml;che:</div>
<div class="t" style="left:1412.4px;top:748.4px;font-size:12px;color:#555;letter-spacing:-0.3px;">100%</div>
<div class="t" style="left:1412.4px;top:780.4px;font-size:12px;color:#555;letter-spacing:-0.3px;">100%</div>
<svg style="left:1456px;top:748px" width="12" height="44" viewBox="1456 748 12 44"><path d="M1458.6 753.4L1461.8 756.6L1465 753.4M1458.6 785.6L1461.8 788.8L1465 785.6" fill="none" stroke="#bdbdbd" stroke-width="1"/></svg>
<div class="a" style="left:1356px;top:805.4px;width:120px;height:103.2px;background:#b7b7b7;"></div>
<div class="a" style="left:1476px;top:805.4px;width:19px;height:103.2px;background:#e6e6e6;"></div>
<svg style="left:1444px;top:848px" width="18" height="18" viewBox="1444 848 18 18"><rect x="1446.8" y="855.2" width="10.4" height="8" rx="1" fill="none" stroke="#222" stroke-width="1.5"/><path d="M1449 855V853.4a3 3 0 0 1 6 0V855" fill="none" stroke="#222" stroke-width="1.4"/><circle cx="1452" cy="859.2" r="1.1" fill="#222"/></svg>
<div class="a" style="left:1096px;top:923px;width:260px;height:23px;background:#f0f0f0;"></div>
<div class="a" style="left:1356px;top:909px;width:139px;height:37px;background:#f0f0f0;"></div>
<div class="a" style="left:1115px;top:924px;width:1px;height:22px;background:#a8a8a8;"></div>
<div class="a" style="left:1116px;top:924px;width:1px;height:22px;background:#fafafa;"></div>
<div class="a" style="left:1163px;top:924px;width:1px;height:22px;background:#a8a8a8;"></div>
<div class="a" style="left:1164px;top:924px;width:1px;height:22px;background:#fafafa;"></div>
<div class="a" style="left:1096px;top:923px;width:19px;height:3px;background:#e0e0e0;"></div>
<svg style="left:1250px;top:916px" width="245" height="30" viewBox="1250 916 245 30"><g fill="none" stroke="#a0a0a0" stroke-width="1.6"><path d="M1264 927.4H1261.4a4 4 0 0 0 0 8H1264M1266.6 927.4H1269.2a4 4 0 0 1 0 8H1266.6"/><path d="M1261.6 931.4H1269" stroke-width="1.4"/></g><path d="M1350 923.4L1353.4 920M1351.6 924L1354 921.6" stroke="#c4c4c4" stroke-width="0.8"/><rect x="1321.6" y="925" width="15" height="10.8" rx="1" fill="#1a1a1a"/><circle cx="1329.1" cy="930.4" r="3.1" fill="#f4f4f4"/><circle cx="1360.4" cy="930.4" r="5.4" fill="#f4f4f4" stroke="#1a1a1a" stroke-width="1.4"/><path d="M1364.2 926.6A5.4 5.4 0 0 1 1356.6 934.2Z" fill="#1a1a1a"/><path d="M1364.4 937h4.2l-2.1 2.2z" fill="#1a1a1a"/><path d="M1385 936.8V925.4H1390.2L1391.8 927.4H1399.2V936.8Z" fill="#d4d4d4" stroke="#333" stroke-width="1.3" stroke-linejoin="round"/><path d="M1418.4 925.2H1428.4V936.8000000000001H1422.8000000000002L1418.4 932.4000000000001Z" fill="#f6f6f6" stroke="#222" stroke-width="1.5" stroke-linejoin="round"/><path d="M1418.4 932.4000000000001H1422.8000000000002V936.8000000000001" fill="#888" stroke="#222" stroke-width="1.1"/><path d="M1450.0 927.2H1459.1999999999998V936.6a1 1 0 0 1 -1 1H1451.0a1 1 0 0 1 -1 -1Z" fill="none" stroke="#b4b4b4" stroke-width="1.2"/><path d="M1448.6 927.0H1460.6M1452.6 926.6V924.6H1456.6V926.6M1452.8 929.6V935.2M1454.6 929.6V935.2M1456.3999999999999 929.6V935.2" fill="none" stroke="#b4b4b4" stroke-width="1.1"/></svg>
<div class="t" style="left:1291.4px;top:920.6px;font-size:19px;font-style:italic;color:#b0b0b0;letter-spacing:-0.6px">fx</div>
<svg style="left:1305px;top:936px" width="6" height="5" viewBox="1305 936 6 5"><path d="M1305.6 937.4h3.6l-1.8 2z" fill="#b8b8b8"/></svg>
<div class="a" style="left:1494.8px;top:92px;width:1.3px;height:854px;background:#989898;"></div>
<div class="a" style="left:1496.1px;top:77px;width:1px;height:869px;background:#f8f8f8;"></div>
<div class="a" style="left:50px;top:945.2px;width:1446px;height:1px;background:#adadad;"></div>
<div class="a" style="left:50px;top:946.2px;width:1446px;height:1px;background:#e6e6e6;"></div>
<svg style="left:0;top:0" width="1500" height="6"><path d="M0 0H4.2Q1 0.8 0 3.4Z" fill="#111"/><path d="M1500 0H1495.8Q1499 0.8 1500 3.4Z" fill="#111"/></svg>
</body></html>
